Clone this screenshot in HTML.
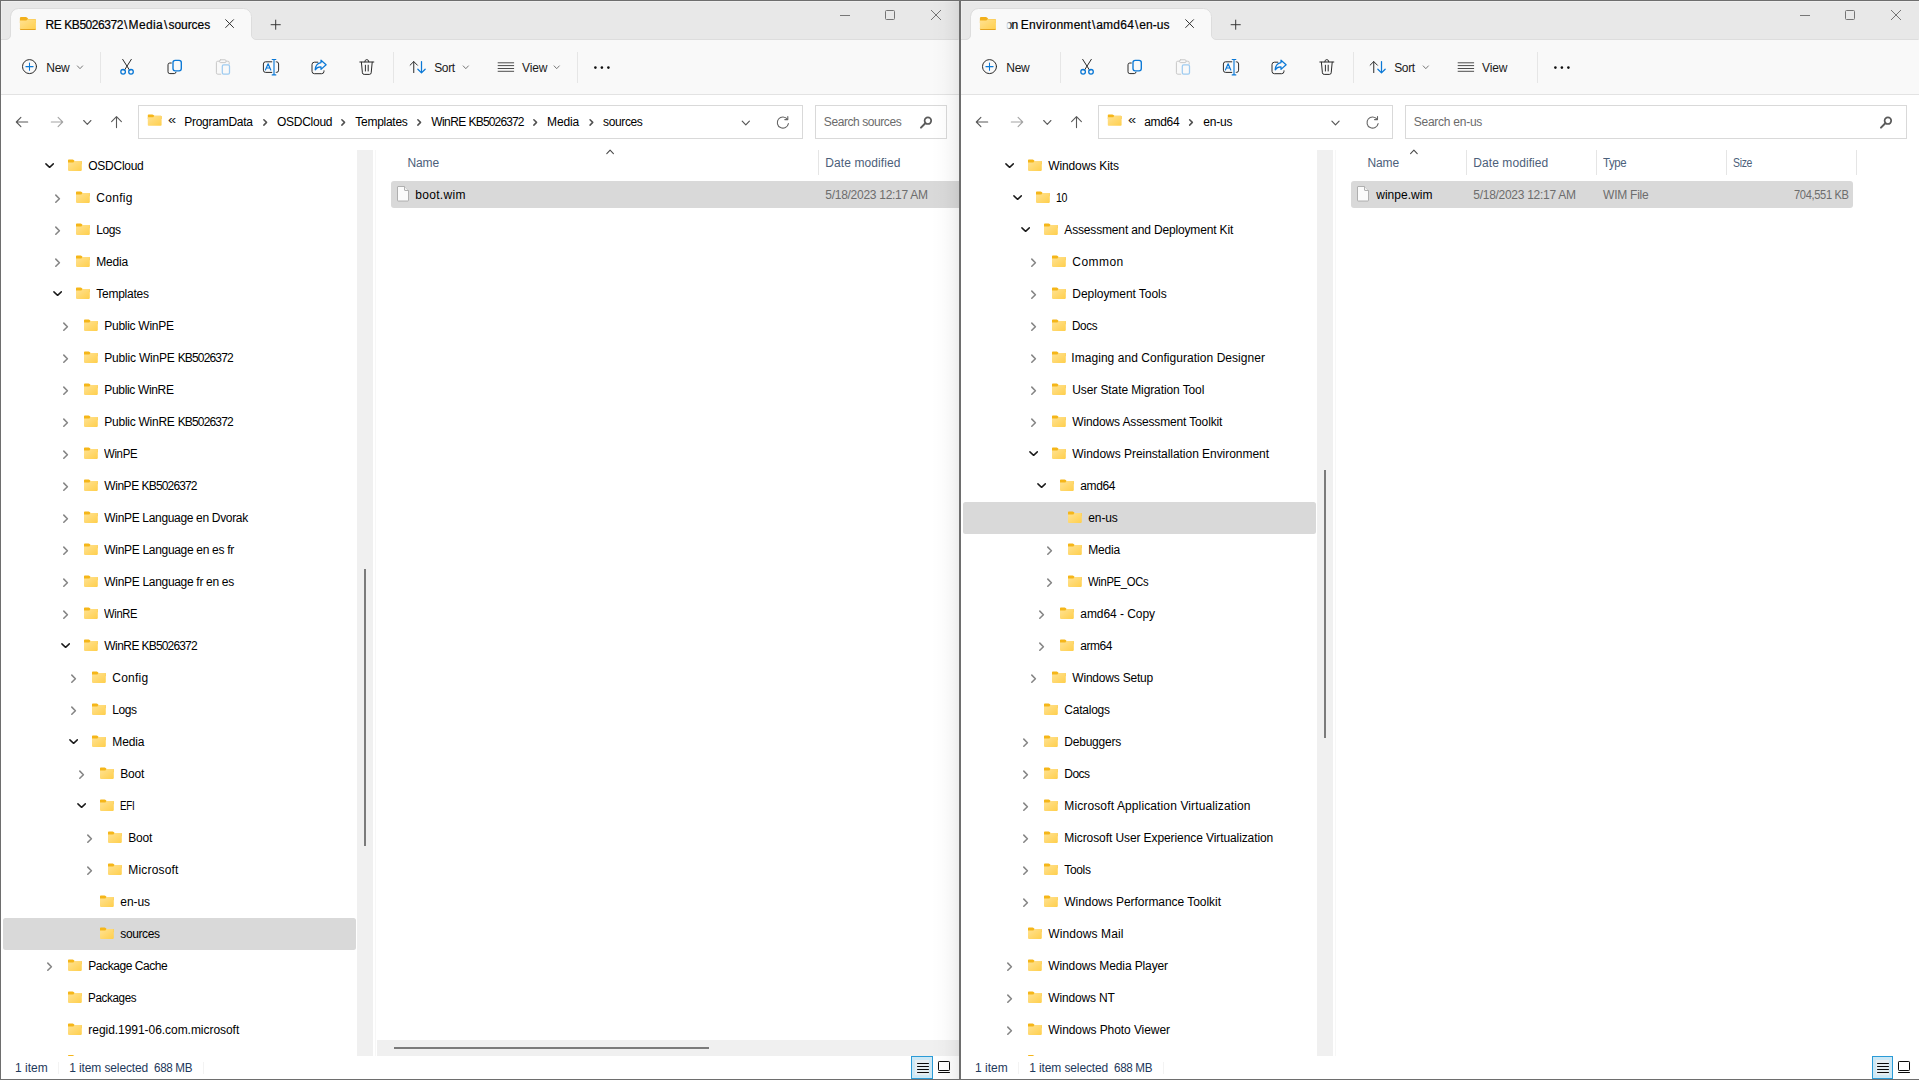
<!DOCTYPE html>
<html lang="en"><head><meta charset="utf-8"><title>File Explorer</title><style>
html,body{margin:0;padding:0;background:#fff;overflow:hidden}
#r{position:relative;width:1919px;height:1080px;overflow:hidden;background:#fff;font-family:"Liberation Sans", sans-serif;font-size:12px}
#r div,#r span,#r svg{position:absolute;box-sizing:border-box}
#r .t{white-space:nowrap;line-height:16px;height:16px}
.bd{pointer-events:none}
</style></head><body><div id="r">
<div style="left:1px;top:1px;width:958px;height:39px;background:#e8e8e8;"></div>
<div style="left:1px;top:1px;width:958px;height:1px;background:#efefef;"></div>
<div style="left:1px;top:2px;width:1px;height:37px;background:#eeeeee;"></div>
<div style="left:1px;top:40px;width:958px;height:54px;background:#f9f9f9;"></div>
<div style="left:1px;top:94px;width:958px;height:1px;background:#e3e3e3;"></div>
<svg style="left:1px;top:0px;" width="959" height="42"><path d="M0 40 V39.5 H5.5 A4.5 4.5 0 0 0 10 35 V16.5 A8 8 0 0 1 18 8.5 H243 A8 8 0 0 1 251 16.5 V35 A4.5 4.5 0 0 0 255.5 39.5 H958 V40 Z" fill="#f9f9f9"/><path d="M0 39.5 H5.5 A4.5 4.5 0 0 0 10 35 V16.5 A8 8 0 0 1 18 8.5 H243 A8 8 0 0 1 251 16.5 V35 A4.5 4.5 0 0 0 255.5 39.5 H958" fill="none" stroke="#dddddd" stroke-width="1" transform="translate(-0.5,0)"/></svg>
<svg style="left:19px;top:16px;" width="17" height="14"><g transform="translate(0.9,0.9)"><defs><linearGradient id="gb6" x1="0" y1="0" x2="1" y2="1"><stop offset="0" stop-color="#ffe293"/><stop offset="1" stop-color="#ffcf4c"/></linearGradient></defs><path d="M0 1.2 Q0 0 1.2 0 H6 Q6.6 0 7.1 0.5 L8.4 2 H14.8 Q16 2 16 3.2 V6 H0 Z" fill="#f2b01c"/><path d="M0 3.7 H6.4 L7.8 2.3 H14.8 Q16 2.3 16 3.5 V11.8 Q16 13 14.8 13 H1.2 Q0 13 0 11.8 Z" fill="url(#gb6)"/><path d="M0 11.3 V11.8 Q0 13 1.2 13 H14.8 Q16 13 16 11.8 V11.3 Q16 12.2 14.8 12.2 H1.2 Q0 12.2 0 11.3 Z" fill="#e5a31f"/></g></svg>
<span class="t" style="left:45.60px;top:16.53px;font-size:12px;color:#000;-webkit-text-stroke:0.2px #000;"><i style="font-style:normal;letter-spacing:-0.445px">RE KB5026372</i><i style="font-style:normal;margin:0 1.128px">\</i><i style="font-style:normal;letter-spacing:0.322px">Media</i><i style="font-style:normal;margin:0 1.128px">\</i><i style="font-style:normal;letter-spacing:-0.047px">sources</i></span>
<svg style="left:224px;top:18px;" width="13" height="13"><path d="M1.4 1.4 L9.8 9.8 M9.8 1.4 L1.4 9.8" stroke="#2a2a2a" stroke-width="0.95" fill="none"/></svg>
<svg style="left:269px;top:18px;" width="14" height="14"><path d="M6.7 1.7 V11.7 M1.7 6.7 H11.7" stroke="#2f2f2f" stroke-width="0.95" fill="none"/></svg>
<div style="left:840px;top:15px;width:10px;height:1px;background:#777;"></div>
<div style="left:885px;top:10px;width:10px;height:10px;border:1px solid #747474;border-radius:1.5px"></div>
<svg style="left:930px;top:9px;" width="13" height="13"><path d="M1 1 L11 11 M11 1 L1 11" stroke="#747474" stroke-width="1" fill="none"/></svg>
<svg style="left:19px;top:57px;" width="21" height="21"><g transform="translate(0.2,0)"><circle cx="10.3" cy="9.6" r="7" fill="none" stroke-linecap="round" stroke-linejoin="round" stroke="#2b2b2b" stroke-width="1"/><path d="M10.3 6 V13.2 M6.7 9.6 H13.9" fill="none" stroke-linecap="round" stroke-linejoin="round" stroke="#0a78d6" stroke-width="1.05"/></g></svg>
<span class="t" style="left:46.30px;top:60.23px;font-size:12px;color:#1a1a1a;letter-spacing:-0.320px;">New</span>
<svg style="left:74px;top:61px;" width="13" height="13"><g transform="translate(0,0.3)"><path d="M3.4 4.6 L6 7.4 L8.6 4.6" fill="none" stroke="#777" stroke-width="1" stroke-linecap="round" stroke-linejoin="round"/></g></svg>
<div style="left:100px;top:52px;width:1px;height:31px;background:#e6e6e6;"></div>
<svg style="left:116px;top:57px;" width="21" height="21"><g transform="translate(0.8,0)"><path d="M5.9 2.4 L12.9 13.4 M14.5 2.4 L7.5 13.4" fill="none" stroke-linecap="round" stroke-linejoin="round" stroke="#2b2b2b" stroke-width="1"/><circle cx="6.3" cy="14.8" r="2.3" fill="none" stroke-linecap="round" stroke-linejoin="round" stroke="#0a78d6" stroke-width="1.3"/><circle cx="14.2" cy="14.8" r="2.3" fill="none" stroke-linecap="round" stroke-linejoin="round" stroke="#0a78d6" stroke-width="1.3"/></g></svg>
<svg style="left:164px;top:57px;" width="21" height="21"><g transform="translate(0.8,0)"><path d="M6.5 6 H5 Q3.2 6 3.2 7.8 V14.8 Q3.2 16.6 5 16.6 H9.5 Q11 16.6 11.2 15.2" fill="none" stroke-linecap="round" stroke-linejoin="round" stroke="#2b2b2b" stroke-width="1"/><rect x="8.2" y="3.3" width="8.3" height="10.5" rx="2.2" fill="none" stroke-linecap="round" stroke-linejoin="round" stroke="#0a78d6" stroke-width="1.35"/></g></svg>
<svg style="left:212px;top:57px;" width="21" height="21"><g transform="translate(0.8,0)"><path d="M8 17.2 H5 Q3.6 17.2 3.6 15.8 V5.4 Q3.6 4.2 5 4.2 H6.6 M13.4 4.2 H15 Q16.4 4.2 16.4 5.4 V7" fill="none" stroke-linecap="round" stroke-linejoin="round" stroke="#c8c8c8" stroke-width="1"/><rect x="6.8" y="2.8" width="6.4" height="2.8" rx="1" fill="none" stroke-linecap="round" stroke-linejoin="round" stroke="#c8c8c8" stroke-width="1"/><rect x="9.5" y="7.8" width="7.2" height="9.4" rx="1.4" fill="none" stroke-linecap="round" stroke-linejoin="round" stroke="#9fcbf0" stroke-width="1.25"/></g></svg>
<svg style="left:260px;top:57px;" width="21" height="21"><g transform="translate(0.8,0)"><path d="M11 4.8 H4.8 Q2.6 4.8 2.6 7 V13.2 Q2.6 15.4 4.8 15.4 H11 M15.4 4.8 H15.6 Q17.8 4.8 17.8 7 V13.2 Q17.8 15.4 15.6 15.4 H15.4" fill="none" stroke-linecap="round" stroke-linejoin="round" stroke="#2b2b2b" stroke-width="1"/><path d="M13.2 2.6 V17.8 M11.4 2.5 H15 M11.4 17.9 H15" fill="none" stroke-linecap="round" stroke-linejoin="round" stroke="#0a78d6" stroke-width="1.15"/><path d="M4.6 13 L7.3 6.8 L10 13 M5.5 11 H9.1" fill="none" stroke-linecap="round" stroke-linejoin="round" stroke="#0a78d6" stroke-width="1.15"/></g></svg>
<svg style="left:308px;top:57px;" width="21" height="21"><g transform="translate(0.8,0)"><path d="M9 5.2 H5.6 Q3.2 5.2 3.2 7.6 V14.3 Q3.2 16.7 5.6 16.7 H12.8 Q15.2 16.7 15.2 14.3 V13.8" fill="none" stroke-linecap="round" stroke-linejoin="round" stroke="#2b2b2b" stroke-width="1"/><path d="M12.2 3.2 L17.3 7.8 L12.2 12.4 V9.9 Q8.4 9.7 6.4 12.8 Q6.8 6.4 12.2 5.6 Z" fill="none" stroke-linecap="round" stroke-linejoin="round" stroke="#0a78d6" stroke-width="1.25"/></g></svg>
<svg style="left:356px;top:57px;" width="21" height="21"><g transform="translate(0.8,0)"><path d="M3 5 H17 M8 4.8 Q8 2.6 10 2.6 Q12 2.6 12 4.8 M4.6 5.2 L5.6 15.8 Q5.8 17.4 7.4 17.4 H12.6 Q14.2 17.4 14.4 15.8 L15.4 5.2 M8.6 8.2 V14 M11.4 8.2 V14" fill="none" stroke-linecap="round" stroke-linejoin="round" stroke="#2b2b2b" stroke-width="1"/></g></svg>
<div style="left:393px;top:52px;width:1px;height:31px;background:#e6e6e6;"></div>
<svg style="left:407px;top:57px;" width="21" height="21"><g transform="translate(0.8,0)"><path d="M5.95 15.6 V4.7 M2.3 8.2 L5.95 4.55 L9.6 8.2" fill="none" stroke-linecap="round" stroke-linejoin="round" stroke="#2b2b2b" stroke-width="1"/><path d="M13.7 4.6 V15.7 M10.05 12.2 L13.7 15.85 L17.35 12.2" fill="none" stroke-linecap="round" stroke-linejoin="round" stroke="#0a78d6" stroke-width="1.25"/></g></svg>
<span class="t" style="left:434.20px;top:60.23px;font-size:12px;color:#1a1a1a;letter-spacing:-0.358px;">Sort</span>
<svg style="left:459px;top:61px;" width="13" height="13"><g transform="translate(0.8,0.3)"><path d="M3.4 4.6 L6 7.4 L8.6 4.6" fill="none" stroke="#777" stroke-width="1" stroke-linecap="round" stroke-linejoin="round"/></g></svg>
<svg style="left:495px;top:57px;" width="21" height="21"><g transform="translate(0.8,0)"><path d="M2.3 5.8 H17.9 M2.3 8.6 H17.9 M2.3 11.5 H17.9 M2.3 14.3 H17.9" fill="none" stroke-linecap="round" stroke-linejoin="round" stroke="#3a3a3a" stroke-width="0.9"/></g></svg>
<span class="t" style="left:522.00px;top:60.23px;font-size:12px;color:#1a1a1a;letter-spacing:-0.109px;">View</span>
<svg style="left:550px;top:61px;" width="13" height="13"><g transform="translate(0.7,0.3)"><path d="M3.4 4.6 L6 7.4 L8.6 4.6" fill="none" stroke="#777" stroke-width="1" stroke-linecap="round" stroke-linejoin="round"/></g></svg>
<div style="left:577px;top:52px;width:1px;height:31px;background:#e6e6e6;"></div>
<svg style="left:590px;top:62px;" width="25" height="13"><circle cx="5.4" cy="5.6" r="1.3" fill="#111"/><circle cx="11.9" cy="5.6" r="1.3" fill="#111"/><circle cx="18.4" cy="5.6" r="1.3" fill="#111"/></svg>
<svg style="left:14px;top:114px;" width="17" height="17"><path d="M13.7 8 H2.4 M6.9 3.4 L2.3 8 L6.9 12.6" fill="none" stroke-linecap="round" stroke-linejoin="round" stroke="#585858" stroke-width="1.1"/></svg>
<svg style="left:49px;top:114px;" width="17" height="17"><path d="M2.3 8 H13.6 M9.1 3.4 L13.7 8 L9.1 12.6" fill="none" stroke-linecap="round" stroke-linejoin="round" stroke="#a4a4a4" stroke-width="1.1"/></svg>
<svg style="left:81px;top:116px;" width="13" height="13"><g transform="translate(0.3,0.4)"><path d="M2.4 4.1 L6 7.9 L9.6 4.1" fill="none" stroke="#5c5c5c" stroke-width="1.1" stroke-linecap="round" stroke-linejoin="round"/></g></svg>
<svg style="left:108px;top:114px;" width="17" height="17"><g transform="translate(0.5,0)"><path d="M8 13.6 V2.9 M3.1 7.6 L8 2.7 L12.9 7.6" fill="none" stroke-linecap="round" stroke-linejoin="round" stroke="#585858" stroke-width="1.1"/></g></svg>
<div style="left:138px;top:105px;width:665px;height:34px;border:1px solid #d9d9d9;background:#fff"></div>
<svg style="left:147px;top:114px;" width="16" height="13"><g transform="translate(0.2,0.1)"><defs><linearGradient id="g37" x1="0" y1="0" x2="1" y2="1"><stop offset="0" stop-color="#ffe293"/><stop offset="1" stop-color="#ffcf4c"/></linearGradient></defs><path d="M0.6 1.1 Q0.6 0.3 1.4 0.3 L5.2 0.3 Q5.8 0.3 6.3 0.8 L7.2 1.7 L13.6 1.7 Q14.4 1.7 14.4 2.5 L14.4 5 L0.6 5 Z" fill="#f5b619"/><path d="M0.6 3.2 L6 3.2 L7 1.9 L13.6 1.9 Q14.4 1.9 14.4 2.7 L14.4 10.9 Q14.4 11.7 13.6 11.7 L1.4 11.7 Q0.6 11.7 0.6 10.9 Z" fill="url(#g37)"/></g></svg>
<span class="t" style="left:168.20px;top:112.23px;font-size:12px;color:#222;transform:scaleX(1.22);transform-origin:0 50%;">«</span>
<span class="t" style="left:184.20px;top:114.33px;font-size:12px;color:#000;letter-spacing:-0.259px;">ProgramData</span>
<svg style="left:259px;top:116px;" width="13" height="13"><g transform="translate(0.2,0.4)"><path d="M4.65 3.3 L7.35 6 L4.65 8.7" fill="none" stroke="#505050" stroke-width="1.5" stroke-linecap="round" stroke-linejoin="round"/></g></svg>
<span class="t" style="left:277.00px;top:114.33px;font-size:12px;color:#000;letter-spacing:-0.269px;">OSDCloud</span>
<svg style="left:337px;top:116px;" width="13" height="13"><g transform="translate(0.2,0.4)"><path d="M4.65 3.3 L7.35 6 L4.65 8.7" fill="none" stroke="#505050" stroke-width="1.5" stroke-linecap="round" stroke-linejoin="round"/></g></svg>
<span class="t" style="left:355.30px;top:114.33px;font-size:12px;color:#000;letter-spacing:-0.274px;">Templates</span>
<svg style="left:413px;top:116px;" width="13" height="13"><g transform="translate(0.2,0.4)"><path d="M4.65 3.3 L7.35 6 L4.65 8.7" fill="none" stroke="#505050" stroke-width="1.5" stroke-linecap="round" stroke-linejoin="round"/></g></svg>
<span class="t" style="left:431.20px;top:114.33px;font-size:12px;color:#000;"><i style="font-style:normal;letter-spacing:-0.545px">WinRE </i><i style="font-style:normal;letter-spacing:-0.848px">KB5026372</i></span>
<svg style="left:529px;top:116px;" width="13" height="13"><g transform="translate(0.2,0.4)"><path d="M4.65 3.3 L7.35 6 L4.65 8.7" fill="none" stroke="#505050" stroke-width="1.5" stroke-linecap="round" stroke-linejoin="round"/></g></svg>
<span class="t" style="left:547.10px;top:114.33px;font-size:12px;color:#000;letter-spacing:-0.152px;">Media</span>
<svg style="left:585px;top:116px;" width="13" height="13"><g transform="translate(0.4,0.4)"><path d="M4.65 3.3 L7.35 6 L4.65 8.7" fill="none" stroke="#505050" stroke-width="1.5" stroke-linecap="round" stroke-linejoin="round"/></g></svg>
<span class="t" style="left:603.10px;top:114.33px;font-size:12px;color:#000;letter-spacing:-0.386px;">sources</span>
<svg style="left:739px;top:117px;" width="13" height="13"><g transform="translate(0.8,0)"><path d="M2.4 4.1 L6 7.9 L9.6 4.1" fill="none" stroke="#555" stroke-width="1.15" stroke-linecap="round" stroke-linejoin="round"/></g></svg>
<svg style="left:774px;top:115px;" width="17" height="17"><g transform="translate(0.8,0)"><path d="M12.6 4.2 A5.6 5.6 0 1 0 13.6 8.6" fill="none" stroke-linecap="round" stroke-linejoin="round" stroke="#666" stroke-width="1.1"/><path d="M13 1.6 V4.6 H10" fill="none" stroke-linecap="round" stroke-linejoin="round" stroke="#666" stroke-width="1.1"/></g></svg>
<div style="left:815px;top:105px;width:132px;height:34px;border:1px solid #d9d9d9;background:#fff"></div>
<span class="t" style="left:823.80px;top:114.33px;font-size:12px;color:#6b6b6b;letter-spacing:-0.421px;">Search sources</span>
<svg style="left:919px;top:115px;" width="15" height="15"><circle cx="8.9" cy="5.7" r="3.3" fill="none" stroke-linecap="round" stroke-linejoin="round" stroke="#5a5a5a" stroke-width="1.7"/><path d="M6.3 8.3 L2 12.6" fill="none" stroke-linecap="round" stroke-linejoin="round" stroke="#5a5a5a" stroke-width="2"/></svg>
<svg style="left:43px;top:159px;" width="13" height="13"><g transform="translate(0.6,0.6)"><path d="M2.3 4.25 L6 7.75 L9.7 4.25" fill="none" stroke="#1a1a1a" stroke-width="1.45" stroke-linecap="round" stroke-linejoin="round"/></g></svg>
<svg style="left:67px;top:159px;" width="16" height="13"><g transform="translate(0.4,0.2)"><defs><linearGradient id="g56" x1="0" y1="0" x2="1" y2="1"><stop offset="0" stop-color="#ffe293"/><stop offset="1" stop-color="#ffcf4c"/></linearGradient></defs><path d="M0.6 1.1 Q0.6 0.3 1.4 0.3 L5.2 0.3 Q5.8 0.3 6.3 0.8 L7.2 1.7 L13.6 1.7 Q14.4 1.7 14.4 2.5 L14.4 5 L0.6 5 Z" fill="#f5b619"/><path d="M0.6 3.2 L6 3.2 L7 1.9 L13.6 1.9 Q14.4 1.9 14.4 2.7 L14.4 10.9 Q14.4 11.7 13.6 11.7 L1.4 11.7 Q0.6 11.7 0.6 10.9 Z" fill="url(#g56)"/></g></svg>
<span class="t" style="left:88.30px;top:158.23px;font-size:12px;color:#000;letter-spacing:-0.269px;">OSDCloud</span>
<svg style="left:51px;top:192px;" width="13" height="13"><g transform="translate(0.6,0.7)"><path d="M4.2 2.4 L7.8 6 L4.2 9.6" fill="none" stroke="#858585" stroke-width="1.55" stroke-linecap="round" stroke-linejoin="round"/></g></svg>
<svg style="left:75px;top:191px;" width="16" height="13"><g transform="translate(0.4,0.2)"><defs><linearGradient id="g59" x1="0" y1="0" x2="1" y2="1"><stop offset="0" stop-color="#ffe293"/><stop offset="1" stop-color="#ffcf4c"/></linearGradient></defs><path d="M0.6 1.1 Q0.6 0.3 1.4 0.3 L5.2 0.3 Q5.8 0.3 6.3 0.8 L7.2 1.7 L13.6 1.7 Q14.4 1.7 14.4 2.5 L14.4 5 L0.6 5 Z" fill="#f5b619"/><path d="M0.6 3.2 L6 3.2 L7 1.9 L13.6 1.9 Q14.4 1.9 14.4 2.7 L14.4 10.9 Q14.4 11.7 13.6 11.7 L1.4 11.7 Q0.6 11.7 0.6 10.9 Z" fill="url(#g59)"/></g></svg>
<span class="t" style="left:96.30px;top:190.23px;font-size:12px;color:#000;letter-spacing:0.277px;">Config</span>
<svg style="left:51px;top:224px;" width="13" height="13"><g transform="translate(0.6,0.7)"><path d="M4.2 2.4 L7.8 6 L4.2 9.6" fill="none" stroke="#858585" stroke-width="1.55" stroke-linecap="round" stroke-linejoin="round"/></g></svg>
<svg style="left:75px;top:223px;" width="16" height="13"><g transform="translate(0.4,0.2)"><defs><linearGradient id="g62" x1="0" y1="0" x2="1" y2="1"><stop offset="0" stop-color="#ffe293"/><stop offset="1" stop-color="#ffcf4c"/></linearGradient></defs><path d="M0.6 1.1 Q0.6 0.3 1.4 0.3 L5.2 0.3 Q5.8 0.3 6.3 0.8 L7.2 1.7 L13.6 1.7 Q14.4 1.7 14.4 2.5 L14.4 5 L0.6 5 Z" fill="#f5b619"/><path d="M0.6 3.2 L6 3.2 L7 1.9 L13.6 1.9 Q14.4 1.9 14.4 2.7 L14.4 10.9 Q14.4 11.7 13.6 11.7 L1.4 11.7 Q0.6 11.7 0.6 10.9 Z" fill="url(#g62)"/></g></svg>
<span class="t" style="left:96.30px;top:222.23px;font-size:12px;color:#000;letter-spacing:-0.407px;">Logs</span>
<svg style="left:51px;top:256px;" width="13" height="13"><g transform="translate(0.6,0.7)"><path d="M4.2 2.4 L7.8 6 L4.2 9.6" fill="none" stroke="#858585" stroke-width="1.55" stroke-linecap="round" stroke-linejoin="round"/></g></svg>
<svg style="left:75px;top:255px;" width="16" height="13"><g transform="translate(0.4,0.2)"><defs><linearGradient id="g65" x1="0" y1="0" x2="1" y2="1"><stop offset="0" stop-color="#ffe293"/><stop offset="1" stop-color="#ffcf4c"/></linearGradient></defs><path d="M0.6 1.1 Q0.6 0.3 1.4 0.3 L5.2 0.3 Q5.8 0.3 6.3 0.8 L7.2 1.7 L13.6 1.7 Q14.4 1.7 14.4 2.5 L14.4 5 L0.6 5 Z" fill="#f5b619"/><path d="M0.6 3.2 L6 3.2 L7 1.9 L13.6 1.9 Q14.4 1.9 14.4 2.7 L14.4 10.9 Q14.4 11.7 13.6 11.7 L1.4 11.7 Q0.6 11.7 0.6 10.9 Z" fill="url(#g65)"/></g></svg>
<span class="t" style="left:96.30px;top:254.23px;font-size:12px;color:#000;letter-spacing:-0.177px;">Media</span>
<svg style="left:51px;top:287px;" width="13" height="13"><g transform="translate(0.6,0.6)"><path d="M2.3 4.25 L6 7.75 L9.7 4.25" fill="none" stroke="#1a1a1a" stroke-width="1.45" stroke-linecap="round" stroke-linejoin="round"/></g></svg>
<svg style="left:75px;top:287px;" width="16" height="13"><g transform="translate(0.4,0.2)"><defs><linearGradient id="g68" x1="0" y1="0" x2="1" y2="1"><stop offset="0" stop-color="#ffe293"/><stop offset="1" stop-color="#ffcf4c"/></linearGradient></defs><path d="M0.6 1.1 Q0.6 0.3 1.4 0.3 L5.2 0.3 Q5.8 0.3 6.3 0.8 L7.2 1.7 L13.6 1.7 Q14.4 1.7 14.4 2.5 L14.4 5 L0.6 5 Z" fill="#f5b619"/><path d="M0.6 3.2 L6 3.2 L7 1.9 L13.6 1.9 Q14.4 1.9 14.4 2.7 L14.4 10.9 Q14.4 11.7 13.6 11.7 L1.4 11.7 Q0.6 11.7 0.6 10.9 Z" fill="url(#g68)"/></g></svg>
<span class="t" style="left:96.30px;top:286.23px;font-size:12px;color:#000;letter-spacing:-0.261px;">Templates</span>
<svg style="left:59px;top:320px;" width="13" height="13"><g transform="translate(0.6,0.7)"><path d="M4.2 2.4 L7.8 6 L4.2 9.6" fill="none" stroke="#858585" stroke-width="1.55" stroke-linecap="round" stroke-linejoin="round"/></g></svg>
<svg style="left:83px;top:319px;" width="16" height="13"><g transform="translate(0.4,0.2)"><defs><linearGradient id="g71" x1="0" y1="0" x2="1" y2="1"><stop offset="0" stop-color="#ffe293"/><stop offset="1" stop-color="#ffcf4c"/></linearGradient></defs><path d="M0.6 1.1 Q0.6 0.3 1.4 0.3 L5.2 0.3 Q5.8 0.3 6.3 0.8 L7.2 1.7 L13.6 1.7 Q14.4 1.7 14.4 2.5 L14.4 5 L0.6 5 Z" fill="#f5b619"/><path d="M0.6 3.2 L6 3.2 L7 1.9 L13.6 1.9 Q14.4 1.9 14.4 2.7 L14.4 10.9 Q14.4 11.7 13.6 11.7 L1.4 11.7 Q0.6 11.7 0.6 10.9 Z" fill="url(#g71)"/></g></svg>
<span class="t" style="left:104.30px;top:318.23px;font-size:12px;color:#000;letter-spacing:-0.281px;">Public WinPE</span>
<svg style="left:59px;top:352px;" width="13" height="13"><g transform="translate(0.6,0.7)"><path d="M4.2 2.4 L7.8 6 L4.2 9.6" fill="none" stroke="#858585" stroke-width="1.55" stroke-linecap="round" stroke-linejoin="round"/></g></svg>
<svg style="left:83px;top:351px;" width="16" height="13"><g transform="translate(0.4,0.2)"><defs><linearGradient id="g74" x1="0" y1="0" x2="1" y2="1"><stop offset="0" stop-color="#ffe293"/><stop offset="1" stop-color="#ffcf4c"/></linearGradient></defs><path d="M0.6 1.1 Q0.6 0.3 1.4 0.3 L5.2 0.3 Q5.8 0.3 6.3 0.8 L7.2 1.7 L13.6 1.7 Q14.4 1.7 14.4 2.5 L14.4 5 L0.6 5 Z" fill="#f5b619"/><path d="M0.6 3.2 L6 3.2 L7 1.9 L13.6 1.9 Q14.4 1.9 14.4 2.7 L14.4 10.9 Q14.4 11.7 13.6 11.7 L1.4 11.7 Q0.6 11.7 0.6 10.9 Z" fill="url(#g74)"/></g></svg>
<span class="t" style="left:104.30px;top:350.23px;font-size:12px;color:#000;"><i style="font-style:normal;letter-spacing:-0.202px">Public WinPE </i><i style="font-style:normal;letter-spacing:-0.848px">KB5026372</i></span>
<svg style="left:59px;top:384px;" width="13" height="13"><g transform="translate(0.6,0.7)"><path d="M4.2 2.4 L7.8 6 L4.2 9.6" fill="none" stroke="#858585" stroke-width="1.55" stroke-linecap="round" stroke-linejoin="round"/></g></svg>
<svg style="left:83px;top:383px;" width="16" height="13"><g transform="translate(0.4,0.2)"><defs><linearGradient id="g77" x1="0" y1="0" x2="1" y2="1"><stop offset="0" stop-color="#ffe293"/><stop offset="1" stop-color="#ffcf4c"/></linearGradient></defs><path d="M0.6 1.1 Q0.6 0.3 1.4 0.3 L5.2 0.3 Q5.8 0.3 6.3 0.8 L7.2 1.7 L13.6 1.7 Q14.4 1.7 14.4 2.5 L14.4 5 L0.6 5 Z" fill="#f5b619"/><path d="M0.6 3.2 L6 3.2 L7 1.9 L13.6 1.9 Q14.4 1.9 14.4 2.7 L14.4 10.9 Q14.4 11.7 13.6 11.7 L1.4 11.7 Q0.6 11.7 0.6 10.9 Z" fill="url(#g77)"/></g></svg>
<span class="t" style="left:104.30px;top:382.23px;font-size:12px;color:#000;letter-spacing:-0.341px;">Public WinRE</span>
<svg style="left:59px;top:416px;" width="13" height="13"><g transform="translate(0.6,0.7)"><path d="M4.2 2.4 L7.8 6 L4.2 9.6" fill="none" stroke="#858585" stroke-width="1.55" stroke-linecap="round" stroke-linejoin="round"/></g></svg>
<svg style="left:83px;top:415px;" width="16" height="13"><g transform="translate(0.4,0.2)"><defs><linearGradient id="g80" x1="0" y1="0" x2="1" y2="1"><stop offset="0" stop-color="#ffe293"/><stop offset="1" stop-color="#ffcf4c"/></linearGradient></defs><path d="M0.6 1.1 Q0.6 0.3 1.4 0.3 L5.2 0.3 Q5.8 0.3 6.3 0.8 L7.2 1.7 L13.6 1.7 Q14.4 1.7 14.4 2.5 L14.4 5 L0.6 5 Z" fill="#f5b619"/><path d="M0.6 3.2 L6 3.2 L7 1.9 L13.6 1.9 Q14.4 1.9 14.4 2.7 L14.4 10.9 Q14.4 11.7 13.6 11.7 L1.4 11.7 Q0.6 11.7 0.6 10.9 Z" fill="url(#g80)"/></g></svg>
<span class="t" style="left:104.30px;top:414.23px;font-size:12px;color:#000;"><i style="font-style:normal;letter-spacing:-0.253px">Public WinRE </i><i style="font-style:normal;letter-spacing:-0.848px">KB5026372</i></span>
<svg style="left:59px;top:448px;" width="13" height="13"><g transform="translate(0.6,0.7)"><path d="M4.2 2.4 L7.8 6 L4.2 9.6" fill="none" stroke="#858585" stroke-width="1.55" stroke-linecap="round" stroke-linejoin="round"/></g></svg>
<svg style="left:83px;top:447px;" width="16" height="13"><g transform="translate(0.4,0.2)"><defs><linearGradient id="g83" x1="0" y1="0" x2="1" y2="1"><stop offset="0" stop-color="#ffe293"/><stop offset="1" stop-color="#ffcf4c"/></linearGradient></defs><path d="M0.6 1.1 Q0.6 0.3 1.4 0.3 L5.2 0.3 Q5.8 0.3 6.3 0.8 L7.2 1.7 L13.6 1.7 Q14.4 1.7 14.4 2.5 L14.4 5 L0.6 5 Z" fill="#f5b619"/><path d="M0.6 3.2 L6 3.2 L7 1.9 L13.6 1.9 Q14.4 1.9 14.4 2.7 L14.4 10.9 Q14.4 11.7 13.6 11.7 L1.4 11.7 Q0.6 11.7 0.6 10.9 Z" fill="url(#g83)"/></g></svg>
<span class="t" style="left:104.30px;top:446.23px;font-size:12px;color:#000;letter-spacing:-0.350px;transform:scaleX(0.9498);transform-origin:0.00px 50%;">WinPE</span>
<svg style="left:59px;top:480px;" width="13" height="13"><g transform="translate(0.6,0.7)"><path d="M4.2 2.4 L7.8 6 L4.2 9.6" fill="none" stroke="#858585" stroke-width="1.55" stroke-linecap="round" stroke-linejoin="round"/></g></svg>
<svg style="left:83px;top:479px;" width="16" height="13"><g transform="translate(0.4,0.2)"><defs><linearGradient id="g86" x1="0" y1="0" x2="1" y2="1"><stop offset="0" stop-color="#ffe293"/><stop offset="1" stop-color="#ffcf4c"/></linearGradient></defs><path d="M0.6 1.1 Q0.6 0.3 1.4 0.3 L5.2 0.3 Q5.8 0.3 6.3 0.8 L7.2 1.7 L13.6 1.7 Q14.4 1.7 14.4 2.5 L14.4 5 L0.6 5 Z" fill="#f5b619"/><path d="M0.6 3.2 L6 3.2 L7 1.9 L13.6 1.9 Q14.4 1.9 14.4 2.7 L14.4 10.9 Q14.4 11.7 13.6 11.7 L1.4 11.7 Q0.6 11.7 0.6 10.9 Z" fill="url(#g86)"/></g></svg>
<span class="t" style="left:104.30px;top:478.23px;font-size:12px;color:#000;"><i style="font-style:normal;letter-spacing:-0.453px">WinPE </i><i style="font-style:normal;letter-spacing:-0.848px">KB5026372</i></span>
<svg style="left:59px;top:512px;" width="13" height="13"><g transform="translate(0.6,0.7)"><path d="M4.2 2.4 L7.8 6 L4.2 9.6" fill="none" stroke="#858585" stroke-width="1.55" stroke-linecap="round" stroke-linejoin="round"/></g></svg>
<svg style="left:83px;top:511px;" width="16" height="13"><g transform="translate(0.4,0.2)"><defs><linearGradient id="g89" x1="0" y1="0" x2="1" y2="1"><stop offset="0" stop-color="#ffe293"/><stop offset="1" stop-color="#ffcf4c"/></linearGradient></defs><path d="M0.6 1.1 Q0.6 0.3 1.4 0.3 L5.2 0.3 Q5.8 0.3 6.3 0.8 L7.2 1.7 L13.6 1.7 Q14.4 1.7 14.4 2.5 L14.4 5 L0.6 5 Z" fill="#f5b619"/><path d="M0.6 3.2 L6 3.2 L7 1.9 L13.6 1.9 Q14.4 1.9 14.4 2.7 L14.4 10.9 Q14.4 11.7 13.6 11.7 L1.4 11.7 Q0.6 11.7 0.6 10.9 Z" fill="url(#g89)"/></g></svg>
<span class="t" style="left:104.30px;top:510.23px;font-size:12px;color:#000;letter-spacing:-0.327px;">WinPE Language en Dvorak</span>
<svg style="left:59px;top:544px;" width="13" height="13"><g transform="translate(0.6,0.7)"><path d="M4.2 2.4 L7.8 6 L4.2 9.6" fill="none" stroke="#858585" stroke-width="1.55" stroke-linecap="round" stroke-linejoin="round"/></g></svg>
<svg style="left:83px;top:543px;" width="16" height="13"><g transform="translate(0.4,0.2)"><defs><linearGradient id="g92" x1="0" y1="0" x2="1" y2="1"><stop offset="0" stop-color="#ffe293"/><stop offset="1" stop-color="#ffcf4c"/></linearGradient></defs><path d="M0.6 1.1 Q0.6 0.3 1.4 0.3 L5.2 0.3 Q5.8 0.3 6.3 0.8 L7.2 1.7 L13.6 1.7 Q14.4 1.7 14.4 2.5 L14.4 5 L0.6 5 Z" fill="#f5b619"/><path d="M0.6 3.2 L6 3.2 L7 1.9 L13.6 1.9 Q14.4 1.9 14.4 2.7 L14.4 10.9 Q14.4 11.7 13.6 11.7 L1.4 11.7 Q0.6 11.7 0.6 10.9 Z" fill="url(#g92)"/></g></svg>
<span class="t" style="left:104.30px;top:542.23px;font-size:12px;color:#000;letter-spacing:-0.312px;">WinPE Language en es fr</span>
<svg style="left:59px;top:576px;" width="13" height="13"><g transform="translate(0.6,0.7)"><path d="M4.2 2.4 L7.8 6 L4.2 9.6" fill="none" stroke="#858585" stroke-width="1.55" stroke-linecap="round" stroke-linejoin="round"/></g></svg>
<svg style="left:83px;top:575px;" width="16" height="13"><g transform="translate(0.4,0.2)"><defs><linearGradient id="g95" x1="0" y1="0" x2="1" y2="1"><stop offset="0" stop-color="#ffe293"/><stop offset="1" stop-color="#ffcf4c"/></linearGradient></defs><path d="M0.6 1.1 Q0.6 0.3 1.4 0.3 L5.2 0.3 Q5.8 0.3 6.3 0.8 L7.2 1.7 L13.6 1.7 Q14.4 1.7 14.4 2.5 L14.4 5 L0.6 5 Z" fill="#f5b619"/><path d="M0.6 3.2 L6 3.2 L7 1.9 L13.6 1.9 Q14.4 1.9 14.4 2.7 L14.4 10.9 Q14.4 11.7 13.6 11.7 L1.4 11.7 Q0.6 11.7 0.6 10.9 Z" fill="url(#g95)"/></g></svg>
<span class="t" style="left:104.30px;top:574.23px;font-size:12px;color:#000;letter-spacing:-0.311px;">WinPE Language fr en es</span>
<svg style="left:59px;top:608px;" width="13" height="13"><g transform="translate(0.6,0.7)"><path d="M4.2 2.4 L7.8 6 L4.2 9.6" fill="none" stroke="#858585" stroke-width="1.55" stroke-linecap="round" stroke-linejoin="round"/></g></svg>
<svg style="left:83px;top:607px;" width="16" height="13"><g transform="translate(0.4,0.2)"><defs><linearGradient id="g98" x1="0" y1="0" x2="1" y2="1"><stop offset="0" stop-color="#ffe293"/><stop offset="1" stop-color="#ffcf4c"/></linearGradient></defs><path d="M0.6 1.1 Q0.6 0.3 1.4 0.3 L5.2 0.3 Q5.8 0.3 6.3 0.8 L7.2 1.7 L13.6 1.7 Q14.4 1.7 14.4 2.5 L14.4 5 L0.6 5 Z" fill="#f5b619"/><path d="M0.6 3.2 L6 3.2 L7 1.9 L13.6 1.9 Q14.4 1.9 14.4 2.7 L14.4 10.9 Q14.4 11.7 13.6 11.7 L1.4 11.7 Q0.6 11.7 0.6 10.9 Z" fill="url(#g98)"/></g></svg>
<span class="t" style="left:104.30px;top:606.23px;font-size:12px;color:#000;letter-spacing:-0.350px;transform:scaleX(0.9323);transform-origin:0.00px 50%;">WinRE</span>
<svg style="left:59px;top:639px;" width="13" height="13"><g transform="translate(0.6,0.6)"><path d="M2.3 4.25 L6 7.75 L9.7 4.25" fill="none" stroke="#1a1a1a" stroke-width="1.45" stroke-linecap="round" stroke-linejoin="round"/></g></svg>
<svg style="left:83px;top:639px;" width="16" height="13"><g transform="translate(0.4,0.2)"><defs><linearGradient id="g101" x1="0" y1="0" x2="1" y2="1"><stop offset="0" stop-color="#ffe293"/><stop offset="1" stop-color="#ffcf4c"/></linearGradient></defs><path d="M0.6 1.1 Q0.6 0.3 1.4 0.3 L5.2 0.3 Q5.8 0.3 6.3 0.8 L7.2 1.7 L13.6 1.7 Q14.4 1.7 14.4 2.5 L14.4 5 L0.6 5 Z" fill="#f5b619"/><path d="M0.6 3.2 L6 3.2 L7 1.9 L13.6 1.9 Q14.4 1.9 14.4 2.7 L14.4 10.9 Q14.4 11.7 13.6 11.7 L1.4 11.7 Q0.6 11.7 0.6 10.9 Z" fill="url(#g101)"/></g></svg>
<span class="t" style="left:104.30px;top:638.23px;font-size:12px;color:#000;"><i style="font-style:normal;letter-spacing:-0.562px">WinRE </i><i style="font-style:normal;letter-spacing:-0.848px">KB5026372</i></span>
<svg style="left:67px;top:672px;" width="13" height="13"><g transform="translate(0.6,0.7)"><path d="M4.2 2.4 L7.8 6 L4.2 9.6" fill="none" stroke="#858585" stroke-width="1.55" stroke-linecap="round" stroke-linejoin="round"/></g></svg>
<svg style="left:91px;top:671px;" width="16" height="13"><g transform="translate(0.4,0.2)"><defs><linearGradient id="g104" x1="0" y1="0" x2="1" y2="1"><stop offset="0" stop-color="#ffe293"/><stop offset="1" stop-color="#ffcf4c"/></linearGradient></defs><path d="M0.6 1.1 Q0.6 0.3 1.4 0.3 L5.2 0.3 Q5.8 0.3 6.3 0.8 L7.2 1.7 L13.6 1.7 Q14.4 1.7 14.4 2.5 L14.4 5 L0.6 5 Z" fill="#f5b619"/><path d="M0.6 3.2 L6 3.2 L7 1.9 L13.6 1.9 Q14.4 1.9 14.4 2.7 L14.4 10.9 Q14.4 11.7 13.6 11.7 L1.4 11.7 Q0.6 11.7 0.6 10.9 Z" fill="url(#g104)"/></g></svg>
<span class="t" style="left:112.30px;top:670.23px;font-size:12px;color:#000;letter-spacing:0.237px;">Config</span>
<svg style="left:67px;top:704px;" width="13" height="13"><g transform="translate(0.6,0.7)"><path d="M4.2 2.4 L7.8 6 L4.2 9.6" fill="none" stroke="#858585" stroke-width="1.55" stroke-linecap="round" stroke-linejoin="round"/></g></svg>
<svg style="left:91px;top:703px;" width="16" height="13"><g transform="translate(0.4,0.2)"><defs><linearGradient id="g107" x1="0" y1="0" x2="1" y2="1"><stop offset="0" stop-color="#ffe293"/><stop offset="1" stop-color="#ffcf4c"/></linearGradient></defs><path d="M0.6 1.1 Q0.6 0.3 1.4 0.3 L5.2 0.3 Q5.8 0.3 6.3 0.8 L7.2 1.7 L13.6 1.7 Q14.4 1.7 14.4 2.5 L14.4 5 L0.6 5 Z" fill="#f5b619"/><path d="M0.6 3.2 L6 3.2 L7 1.9 L13.6 1.9 Q14.4 1.9 14.4 2.7 L14.4 10.9 Q14.4 11.7 13.6 11.7 L1.4 11.7 Q0.6 11.7 0.6 10.9 Z" fill="url(#g107)"/></g></svg>
<span class="t" style="left:112.30px;top:702.23px;font-size:12px;color:#000;letter-spacing:-0.474px;">Logs</span>
<svg style="left:67px;top:735px;" width="13" height="13"><g transform="translate(0.6,0.6)"><path d="M2.3 4.25 L6 7.75 L9.7 4.25" fill="none" stroke="#1a1a1a" stroke-width="1.45" stroke-linecap="round" stroke-linejoin="round"/></g></svg>
<svg style="left:91px;top:735px;" width="16" height="13"><g transform="translate(0.4,0.2)"><defs><linearGradient id="g110" x1="0" y1="0" x2="1" y2="1"><stop offset="0" stop-color="#ffe293"/><stop offset="1" stop-color="#ffcf4c"/></linearGradient></defs><path d="M0.6 1.1 Q0.6 0.3 1.4 0.3 L5.2 0.3 Q5.8 0.3 6.3 0.8 L7.2 1.7 L13.6 1.7 Q14.4 1.7 14.4 2.5 L14.4 5 L0.6 5 Z" fill="#f5b619"/><path d="M0.6 3.2 L6 3.2 L7 1.9 L13.6 1.9 Q14.4 1.9 14.4 2.7 L14.4 10.9 Q14.4 11.7 13.6 11.7 L1.4 11.7 Q0.6 11.7 0.6 10.9 Z" fill="url(#g110)"/></g></svg>
<span class="t" style="left:112.30px;top:734.23px;font-size:12px;color:#000;letter-spacing:-0.127px;">Media</span>
<svg style="left:75px;top:768px;" width="13" height="13"><g transform="translate(0.6,0.7)"><path d="M4.2 2.4 L7.8 6 L4.2 9.6" fill="none" stroke="#858585" stroke-width="1.55" stroke-linecap="round" stroke-linejoin="round"/></g></svg>
<svg style="left:99px;top:767px;" width="16" height="13"><g transform="translate(0.4,0.2)"><defs><linearGradient id="g113" x1="0" y1="0" x2="1" y2="1"><stop offset="0" stop-color="#ffe293"/><stop offset="1" stop-color="#ffcf4c"/></linearGradient></defs><path d="M0.6 1.1 Q0.6 0.3 1.4 0.3 L5.2 0.3 Q5.8 0.3 6.3 0.8 L7.2 1.7 L13.6 1.7 Q14.4 1.7 14.4 2.5 L14.4 5 L0.6 5 Z" fill="#f5b619"/><path d="M0.6 3.2 L6 3.2 L7 1.9 L13.6 1.9 Q14.4 1.9 14.4 2.7 L14.4 10.9 Q14.4 11.7 13.6 11.7 L1.4 11.7 Q0.6 11.7 0.6 10.9 Z" fill="url(#g113)"/></g></svg>
<span class="t" style="left:120.30px;top:766.23px;font-size:12px;color:#000;letter-spacing:-0.184px;">Boot</span>
<svg style="left:75px;top:799px;" width="13" height="13"><g transform="translate(0.6,0.6)"><path d="M2.3 4.25 L6 7.75 L9.7 4.25" fill="none" stroke="#1a1a1a" stroke-width="1.45" stroke-linecap="round" stroke-linejoin="round"/></g></svg>
<svg style="left:99px;top:799px;" width="16" height="13"><g transform="translate(0.4,0.2)"><defs><linearGradient id="g116" x1="0" y1="0" x2="1" y2="1"><stop offset="0" stop-color="#ffe293"/><stop offset="1" stop-color="#ffcf4c"/></linearGradient></defs><path d="M0.6 1.1 Q0.6 0.3 1.4 0.3 L5.2 0.3 Q5.8 0.3 6.3 0.8 L7.2 1.7 L13.6 1.7 Q14.4 1.7 14.4 2.5 L14.4 5 L0.6 5 Z" fill="#f5b619"/><path d="M0.6 3.2 L6 3.2 L7 1.9 L13.6 1.9 Q14.4 1.9 14.4 2.7 L14.4 10.9 Q14.4 11.7 13.6 11.7 L1.4 11.7 Q0.6 11.7 0.6 10.9 Z" fill="url(#g116)"/></g></svg>
<span class="t" style="left:120.30px;top:798.23px;font-size:12px;color:#000;letter-spacing:-0.350px;transform:scaleX(0.8166);transform-origin:0.00px 50%;">EFI</span>
<svg style="left:83px;top:832px;" width="13" height="13"><g transform="translate(0.6,0.7)"><path d="M4.2 2.4 L7.8 6 L4.2 9.6" fill="none" stroke="#858585" stroke-width="1.55" stroke-linecap="round" stroke-linejoin="round"/></g></svg>
<svg style="left:107px;top:831px;" width="16" height="13"><g transform="translate(0.4,0.2)"><defs><linearGradient id="g119" x1="0" y1="0" x2="1" y2="1"><stop offset="0" stop-color="#ffe293"/><stop offset="1" stop-color="#ffcf4c"/></linearGradient></defs><path d="M0.6 1.1 Q0.6 0.3 1.4 0.3 L5.2 0.3 Q5.8 0.3 6.3 0.8 L7.2 1.7 L13.6 1.7 Q14.4 1.7 14.4 2.5 L14.4 5 L0.6 5 Z" fill="#f5b619"/><path d="M0.6 3.2 L6 3.2 L7 1.9 L13.6 1.9 Q14.4 1.9 14.4 2.7 L14.4 10.9 Q14.4 11.7 13.6 11.7 L1.4 11.7 Q0.6 11.7 0.6 10.9 Z" fill="url(#g119)"/></g></svg>
<span class="t" style="left:128.30px;top:830.23px;font-size:12px;color:#000;letter-spacing:-0.217px;">Boot</span>
<svg style="left:83px;top:864px;" width="13" height="13"><g transform="translate(0.6,0.7)"><path d="M4.2 2.4 L7.8 6 L4.2 9.6" fill="none" stroke="#858585" stroke-width="1.55" stroke-linecap="round" stroke-linejoin="round"/></g></svg>
<svg style="left:107px;top:863px;" width="16" height="13"><g transform="translate(0.4,0.2)"><defs><linearGradient id="g122" x1="0" y1="0" x2="1" y2="1"><stop offset="0" stop-color="#ffe293"/><stop offset="1" stop-color="#ffcf4c"/></linearGradient></defs><path d="M0.6 1.1 Q0.6 0.3 1.4 0.3 L5.2 0.3 Q5.8 0.3 6.3 0.8 L7.2 1.7 L13.6 1.7 Q14.4 1.7 14.4 2.5 L14.4 5 L0.6 5 Z" fill="#f5b619"/><path d="M0.6 3.2 L6 3.2 L7 1.9 L13.6 1.9 Q14.4 1.9 14.4 2.7 L14.4 10.9 Q14.4 11.7 13.6 11.7 L1.4 11.7 Q0.6 11.7 0.6 10.9 Z" fill="url(#g122)"/></g></svg>
<span class="t" style="left:128.30px;top:862.23px;font-size:12px;color:#000;letter-spacing:0.183px;">Microsoft</span>
<svg style="left:99px;top:895px;" width="16" height="13"><g transform="translate(0.4,0.2)"><defs><linearGradient id="g124" x1="0" y1="0" x2="1" y2="1"><stop offset="0" stop-color="#ffe293"/><stop offset="1" stop-color="#ffcf4c"/></linearGradient></defs><path d="M0.6 1.1 Q0.6 0.3 1.4 0.3 L5.2 0.3 Q5.8 0.3 6.3 0.8 L7.2 1.7 L13.6 1.7 Q14.4 1.7 14.4 2.5 L14.4 5 L0.6 5 Z" fill="#f5b619"/><path d="M0.6 3.2 L6 3.2 L7 1.9 L13.6 1.9 Q14.4 1.9 14.4 2.7 L14.4 10.9 Q14.4 11.7 13.6 11.7 L1.4 11.7 Q0.6 11.7 0.6 10.9 Z" fill="url(#g124)"/></g></svg>
<span class="t" style="left:120.30px;top:894.23px;font-size:12px;color:#000;letter-spacing:-0.054px;">en-us</span>
<div style="left:3px;top:918px;width:353px;height:32px;background:#d9d9d9;border-radius:2.5px"></div>
<svg style="left:99px;top:927px;" width="16" height="13"><g transform="translate(0.4,0.2)"><defs><linearGradient id="g127" x1="0" y1="0" x2="1" y2="1"><stop offset="0" stop-color="#ffe293"/><stop offset="1" stop-color="#ffcf4c"/></linearGradient></defs><path d="M0.6 1.1 Q0.6 0.3 1.4 0.3 L5.2 0.3 Q5.8 0.3 6.3 0.8 L7.2 1.7 L13.6 1.7 Q14.4 1.7 14.4 2.5 L14.4 5 L0.6 5 Z" fill="#f5b619"/><path d="M0.6 3.2 L6 3.2 L7 1.9 L13.6 1.9 Q14.4 1.9 14.4 2.7 L14.4 10.9 Q14.4 11.7 13.6 11.7 L1.4 11.7 Q0.6 11.7 0.6 10.9 Z" fill="url(#g127)"/></g></svg>
<span class="t" style="left:120.30px;top:926.23px;font-size:12px;color:#000;letter-spacing:-0.403px;">sources</span>
<svg style="left:43px;top:960px;" width="13" height="13"><g transform="translate(0.6,0.7)"><path d="M4.2 2.4 L7.8 6 L4.2 9.6" fill="none" stroke="#858585" stroke-width="1.55" stroke-linecap="round" stroke-linejoin="round"/></g></svg>
<svg style="left:67px;top:959px;" width="16" height="13"><g transform="translate(0.4,0.2)"><defs><linearGradient id="g130" x1="0" y1="0" x2="1" y2="1"><stop offset="0" stop-color="#ffe293"/><stop offset="1" stop-color="#ffcf4c"/></linearGradient></defs><path d="M0.6 1.1 Q0.6 0.3 1.4 0.3 L5.2 0.3 Q5.8 0.3 6.3 0.8 L7.2 1.7 L13.6 1.7 Q14.4 1.7 14.4 2.5 L14.4 5 L0.6 5 Z" fill="#f5b619"/><path d="M0.6 3.2 L6 3.2 L7 1.9 L13.6 1.9 Q14.4 1.9 14.4 2.7 L14.4 10.9 Q14.4 11.7 13.6 11.7 L1.4 11.7 Q0.6 11.7 0.6 10.9 Z" fill="url(#g130)"/></g></svg>
<span class="t" style="left:88.30px;top:958.23px;font-size:12px;color:#000;letter-spacing:-0.437px;">Package Cache</span>
<svg style="left:67px;top:991px;" width="16" height="13"><g transform="translate(0.4,0.2)"><defs><linearGradient id="g132" x1="0" y1="0" x2="1" y2="1"><stop offset="0" stop-color="#ffe293"/><stop offset="1" stop-color="#ffcf4c"/></linearGradient></defs><path d="M0.6 1.1 Q0.6 0.3 1.4 0.3 L5.2 0.3 Q5.8 0.3 6.3 0.8 L7.2 1.7 L13.6 1.7 Q14.4 1.7 14.4 2.5 L14.4 5 L0.6 5 Z" fill="#f5b619"/><path d="M0.6 3.2 L6 3.2 L7 1.9 L13.6 1.9 Q14.4 1.9 14.4 2.7 L14.4 10.9 Q14.4 11.7 13.6 11.7 L1.4 11.7 Q0.6 11.7 0.6 10.9 Z" fill="url(#g132)"/></g></svg>
<span class="t" style="left:88.30px;top:990.23px;font-size:12px;color:#000;letter-spacing:-0.350px;transform:scaleX(0.9672);transform-origin:0.00px 50%;">Packages</span>
<svg style="left:67px;top:1023px;" width="16" height="13"><g transform="translate(0.4,0.2)"><defs><linearGradient id="g134" x1="0" y1="0" x2="1" y2="1"><stop offset="0" stop-color="#ffe293"/><stop offset="1" stop-color="#ffcf4c"/></linearGradient></defs><path d="M0.6 1.1 Q0.6 0.3 1.4 0.3 L5.2 0.3 Q5.8 0.3 6.3 0.8 L7.2 1.7 L13.6 1.7 Q14.4 1.7 14.4 2.5 L14.4 5 L0.6 5 Z" fill="#f5b619"/><path d="M0.6 3.2 L6 3.2 L7 1.9 L13.6 1.9 Q14.4 1.9 14.4 2.7 L14.4 10.9 Q14.4 11.7 13.6 11.7 L1.4 11.7 Q0.6 11.7 0.6 10.9 Z" fill="url(#g134)"/></g></svg>
<span class="t" style="left:88.30px;top:1022.23px;font-size:12px;color:#000;letter-spacing:-0.044px;">regid.1991-06.com.microsoft</span>
<div style="left:66px;top:1046px;width:20px;height:10px;overflow:hidden">
<svg style="left:1px;top:8px;" width="16" height="13"><g transform="translate(0.4,0.6)"><defs><linearGradient id="g137" x1="0" y1="0" x2="1" y2="1"><stop offset="0" stop-color="#ffe293"/><stop offset="1" stop-color="#ffcf4c"/></linearGradient></defs><path d="M0.6 1.1 Q0.6 0.3 1.4 0.3 L5.2 0.3 Q5.8 0.3 6.3 0.8 L7.2 1.7 L13.6 1.7 Q14.4 1.7 14.4 2.5 L14.4 5 L0.6 5 Z" fill="#f5b619"/><path d="M0.6 3.2 L6 3.2 L7 1.9 L13.6 1.9 Q14.4 1.9 14.4 2.7 L14.4 10.9 Q14.4 11.7 13.6 11.7 L1.4 11.7 Q0.6 11.7 0.6 10.9 Z" fill="url(#g137)"/></g></svg>
</div>
<div style="left:357px;top:150px;width:16px;height:906px;background:#f0f0f0;"></div>
<div style="left:375px;top:150px;width:1px;height:906px;background:#f7f7f7;"></div>
<div style="left:364px;top:569px;width:2px;height:277px;background:#7b7b7b;"></div>
<span class="t" style="left:407.40px;top:154.83px;font-size:12px;color:#4c607a;letter-spacing:-0.112px;">Name</span>
<svg style="left:604px;top:145px;" width="13" height="13"><g transform="translate(0.1,0.9)"><path d="M2.7 7.7 L6 4.3 L9.3 7.7" fill="none" stroke="#4a4a4a" stroke-width="1.1" stroke-linecap="round" stroke-linejoin="round"/></g></svg>
<div style="left:818px;top:150px;width:1px;height:25px;background:#e5e5e5;"></div>
<span class="t" style="left:825.30px;top:154.83px;font-size:12px;color:#4c607a;letter-spacing:0.086px;">Date modified</span>
<div style="left:391px;top:181px;width:568px;height:27px;background:#d9d9d9;border-radius:3px 0 0 3px"></div>
<svg style="left:397px;top:186px;" width="13" height="17"><path d="M1 0.5 H7.5 L11.5 4.5 V14.5 Q11.5 15 11 15 H1 Q0.5 15 0.5 14.5 V1 Q0.5 0.5 1 0.5 Z" fill="#fbfbfb" stroke="#a8a8a8" stroke-width="0.9"/><path d="M7.5 0.5 V4 Q7.5 4.5 8 4.5 H11.5" fill="#f0f0f0" stroke="#a8a8a8" stroke-width="0.9"/></svg>
<span class="t" style="left:415.20px;top:187.23px;font-size:12px;color:#000;letter-spacing:0.311px;">boot.wim</span>
<span class="t" style="left:825.30px;top:187.23px;font-size:12px;color:#6d6d6d;letter-spacing:-0.276px;">5/18/2023 12:17 AM</span>
<div style="left:377px;top:1040px;width:582px;height:16px;background:#f0f0f0;"></div>
<div style="left:394px;top:1047px;width:315px;height:2px;background:#7b7b7b;"></div>
<span class="t" style="left:15.10px;top:1060.23px;font-size:12px;color:#1e395b;letter-spacing:0.004px;">1 item</span>
<div style="left:58px;top:1062px;width:1px;height:12px;background:#f3f3f3;"></div>
<span class="t" style="left:69.30px;top:1060.23px;font-size:12px;color:#1e395b;letter-spacing:-0.124px;">1 item selected</span>
<span class="t" style="left:154.20px;top:1060.23px;font-size:12px;color:#1e395b;letter-spacing:-0.350px;transform:scaleX(0.9697);transform-origin:0.00px 50%;">688 MB</span>
<div style="left:203px;top:1062px;width:1px;height:12px;background:#f3f3f3;"></div>
<div style="left:911px;top:1056px;width:22px;height:23px;border:1px solid #2a9bd7;background:#e6eef2;box-shadow:inset 0 0 0 3px #cde8f5"></div>
<div style="left:917px;top:1062.8px;width:12px;height:1.2px;background:#0a0a0a;border-radius:0.6px"></div>
<div style="left:917px;top:1065.85px;width:12px;height:1.2px;background:#0a0a0a;border-radius:0.6px"></div>
<div style="left:917px;top:1068.9px;width:12px;height:1.2px;background:#0a0a0a;border-radius:0.6px"></div>
<div style="left:917px;top:1071.95px;width:12px;height:1.2px;background:#0a0a0a;border-radius:0.6px"></div>
<div style="left:938px;top:1061px;width:12px;height:10px;border:1.6px solid #0a0a0a;border-radius:1.2px"></div>
<div style="left:938px;top:1071.9px;width:12px;height:1.3px;background:#0a0a0a;border-radius:0.6px"></div>
<div style="left:931px;top:1px;width:28px;height:1078px;background:linear-gradient(90deg,rgba(0,0,0,0),rgba(0,0,0,0.012) 45%,rgba(0,0,0,0.035) 75%,rgba(0,0,0,0.07))"></div>
<div style="left:961px;top:1px;width:958px;height:39px;background:#e8e8e8;"></div>
<div style="left:961px;top:1px;width:958px;height:1px;background:#efefef;"></div>
<div style="left:961px;top:2px;width:1px;height:37px;background:#eeeeee;"></div>
<div style="left:961px;top:40px;width:958px;height:54px;background:#f9f9f9;"></div>
<div style="left:961px;top:94px;width:958px;height:1px;background:#e3e3e3;"></div>
<svg style="left:961px;top:0px;" width="959" height="42"><path d="M0 40 V39.5 H5.5 A4.5 4.5 0 0 0 10 35 V16.5 A8 8 0 0 1 18 8.5 H243 A8 8 0 0 1 251 16.5 V35 A4.5 4.5 0 0 0 255.5 39.5 H958 V40 Z" fill="#f9f9f9"/><path d="M0 39.5 H5.5 A4.5 4.5 0 0 0 10 35 V16.5 A8 8 0 0 1 18 8.5 H243 A8 8 0 0 1 251 16.5 V35 A4.5 4.5 0 0 0 255.5 39.5 H958" fill="none" stroke="#dddddd" stroke-width="1" transform="translate(-0.5,0)"/></svg>
<svg style="left:979px;top:16px;" width="17" height="14"><g transform="translate(0.9,0.9)"><defs><linearGradient id="gb171" x1="0" y1="0" x2="1" y2="1"><stop offset="0" stop-color="#ffe293"/><stop offset="1" stop-color="#ffcf4c"/></linearGradient></defs><path d="M0 1.2 Q0 0 1.2 0 H6 Q6.6 0 7.1 0.5 L8.4 2 H14.8 Q16 2 16 3.2 V6 H0 Z" fill="#f2b01c"/><path d="M0 3.7 H6.4 L7.8 2.3 H14.8 Q16 2.3 16 3.5 V11.8 Q16 13 14.8 13 H1.2 Q0 13 0 11.8 Z" fill="url(#gb171)"/><path d="M0 11.3 V11.8 Q0 13 1.2 13 H14.8 Q16 13 16 11.8 V11.3 Q16 12.2 14.8 12.2 H1.2 Q0 12.2 0 11.3 Z" fill="#e5a31f"/></g></svg>
<span class="t" style="left:1005.40px;top:16.53px;font-size:12px;color:#000;-webkit-text-stroke:0.2px #000;"><i style="font-style:normal;letter-spacing:-0.462px">on </i><i style="font-style:normal;letter-spacing:0.284px">Environment</i><i style="font-style:normal;margin:0 0.828px">\</i><i style="font-style:normal;letter-spacing:0.259px">amd64</i><i style="font-style:normal;margin:0 0.828px">\</i><i style="font-style:normal;letter-spacing:0.114px">en-us</i></span>
<div style="left:1003px;top:14px;width:9px;height:20px;background:linear-gradient(90deg,#f9f9f9 0,#f9f9f9 35%,rgba(249,249,249,0) 100%)"></div>
<svg style="left:1184px;top:18px;" width="13" height="13"><path d="M1.4 1.4 L9.8 9.8 M9.8 1.4 L1.4 9.8" stroke="#2a2a2a" stroke-width="0.95" fill="none"/></svg>
<svg style="left:1229px;top:18px;" width="14" height="14"><path d="M6.7 1.7 V11.7 M1.7 6.7 H11.7" stroke="#2f2f2f" stroke-width="0.95" fill="none"/></svg>
<div style="left:1800px;top:15px;width:10px;height:1px;background:#777;"></div>
<div style="left:1845px;top:10px;width:10px;height:10px;border:1px solid #747474;border-radius:1.5px"></div>
<svg style="left:1890px;top:9px;" width="13" height="13"><path d="M1 1 L11 11 M11 1 L1 11" stroke="#747474" stroke-width="1" fill="none"/></svg>
<svg style="left:979px;top:57px;" width="21" height="21"><g transform="translate(0.2,0)"><circle cx="10.3" cy="9.6" r="7" fill="none" stroke-linecap="round" stroke-linejoin="round" stroke="#2b2b2b" stroke-width="1"/><path d="M10.3 6 V13.2 M6.7 9.6 H13.9" fill="none" stroke-linecap="round" stroke-linejoin="round" stroke="#0a78d6" stroke-width="1.05"/></g></svg>
<span class="t" style="left:1006.30px;top:60.23px;font-size:12px;color:#1a1a1a;letter-spacing:-0.320px;">New</span>
<div style="left:1060px;top:52px;width:1px;height:31px;background:#e6e6e6;"></div>
<svg style="left:1076px;top:57px;" width="21" height="21"><g transform="translate(0.8,0)"><path d="M5.9 2.4 L12.9 13.4 M14.5 2.4 L7.5 13.4" fill="none" stroke-linecap="round" stroke-linejoin="round" stroke="#2b2b2b" stroke-width="1"/><circle cx="6.3" cy="14.8" r="2.3" fill="none" stroke-linecap="round" stroke-linejoin="round" stroke="#0a78d6" stroke-width="1.3"/><circle cx="14.2" cy="14.8" r="2.3" fill="none" stroke-linecap="round" stroke-linejoin="round" stroke="#0a78d6" stroke-width="1.3"/></g></svg>
<svg style="left:1124px;top:57px;" width="21" height="21"><g transform="translate(0.8,0)"><path d="M6.5 6 H5 Q3.2 6 3.2 7.8 V14.8 Q3.2 16.6 5 16.6 H9.5 Q11 16.6 11.2 15.2" fill="none" stroke-linecap="round" stroke-linejoin="round" stroke="#2b2b2b" stroke-width="1"/><rect x="8.2" y="3.3" width="8.3" height="10.5" rx="2.2" fill="none" stroke-linecap="round" stroke-linejoin="round" stroke="#0a78d6" stroke-width="1.35"/></g></svg>
<svg style="left:1172px;top:57px;" width="21" height="21"><g transform="translate(0.8,0)"><path d="M8 17.2 H5 Q3.6 17.2 3.6 15.8 V5.4 Q3.6 4.2 5 4.2 H6.6 M13.4 4.2 H15 Q16.4 4.2 16.4 5.4 V7" fill="none" stroke-linecap="round" stroke-linejoin="round" stroke="#c8c8c8" stroke-width="1"/><rect x="6.8" y="2.8" width="6.4" height="2.8" rx="1" fill="none" stroke-linecap="round" stroke-linejoin="round" stroke="#c8c8c8" stroke-width="1"/><rect x="9.5" y="7.8" width="7.2" height="9.4" rx="1.4" fill="none" stroke-linecap="round" stroke-linejoin="round" stroke="#9fcbf0" stroke-width="1.25"/></g></svg>
<svg style="left:1220px;top:57px;" width="21" height="21"><g transform="translate(0.8,0)"><path d="M11 4.8 H4.8 Q2.6 4.8 2.6 7 V13.2 Q2.6 15.4 4.8 15.4 H11 M15.4 4.8 H15.6 Q17.8 4.8 17.8 7 V13.2 Q17.8 15.4 15.6 15.4 H15.4" fill="none" stroke-linecap="round" stroke-linejoin="round" stroke="#2b2b2b" stroke-width="1"/><path d="M13.2 2.6 V17.8 M11.4 2.5 H15 M11.4 17.9 H15" fill="none" stroke-linecap="round" stroke-linejoin="round" stroke="#0a78d6" stroke-width="1.15"/><path d="M4.6 13 L7.3 6.8 L10 13 M5.5 11 H9.1" fill="none" stroke-linecap="round" stroke-linejoin="round" stroke="#0a78d6" stroke-width="1.15"/></g></svg>
<svg style="left:1268px;top:57px;" width="21" height="21"><g transform="translate(0.8,0)"><path d="M9 5.2 H5.6 Q3.2 5.2 3.2 7.6 V14.3 Q3.2 16.7 5.6 16.7 H12.8 Q15.2 16.7 15.2 14.3 V13.8" fill="none" stroke-linecap="round" stroke-linejoin="round" stroke="#2b2b2b" stroke-width="1"/><path d="M12.2 3.2 L17.3 7.8 L12.2 12.4 V9.9 Q8.4 9.7 6.4 12.8 Q6.8 6.4 12.2 5.6 Z" fill="none" stroke-linecap="round" stroke-linejoin="round" stroke="#0a78d6" stroke-width="1.25"/></g></svg>
<svg style="left:1316px;top:57px;" width="21" height="21"><g transform="translate(0.8,0)"><path d="M3 5 H17 M8 4.8 Q8 2.6 10 2.6 Q12 2.6 12 4.8 M4.6 5.2 L5.6 15.8 Q5.8 17.4 7.4 17.4 H12.6 Q14.2 17.4 14.4 15.8 L15.4 5.2 M8.6 8.2 V14 M11.4 8.2 V14" fill="none" stroke-linecap="round" stroke-linejoin="round" stroke="#2b2b2b" stroke-width="1"/></g></svg>
<div style="left:1353px;top:52px;width:1px;height:31px;background:#e6e6e6;"></div>
<svg style="left:1367px;top:57px;" width="21" height="21"><g transform="translate(0.8,0)"><path d="M5.95 15.6 V4.7 M2.3 8.2 L5.95 4.55 L9.6 8.2" fill="none" stroke-linecap="round" stroke-linejoin="round" stroke="#2b2b2b" stroke-width="1"/><path d="M13.7 4.6 V15.7 M10.05 12.2 L13.7 15.85 L17.35 12.2" fill="none" stroke-linecap="round" stroke-linejoin="round" stroke="#0a78d6" stroke-width="1.25"/></g></svg>
<span class="t" style="left:1394.20px;top:60.23px;font-size:12px;color:#1a1a1a;letter-spacing:-0.358px;">Sort</span>
<svg style="left:1419px;top:61px;" width="13" height="13"><g transform="translate(0.8,0.3)"><path d="M3.4 4.6 L6 7.4 L8.6 4.6" fill="none" stroke="#777" stroke-width="1" stroke-linecap="round" stroke-linejoin="round"/></g></svg>
<svg style="left:1455px;top:57px;" width="21" height="21"><g transform="translate(0.8,0)"><path d="M2.3 5.8 H17.9 M2.3 8.6 H17.9 M2.3 11.5 H17.9 M2.3 14.3 H17.9" fill="none" stroke-linecap="round" stroke-linejoin="round" stroke="#3a3a3a" stroke-width="0.9"/></g></svg>
<span class="t" style="left:1482.00px;top:60.23px;font-size:12px;color:#1a1a1a;letter-spacing:-0.109px;">View</span>
<div style="left:1537px;top:52px;width:1px;height:31px;background:#e6e6e6;"></div>
<svg style="left:1550px;top:62px;" width="25" height="13"><circle cx="5.4" cy="5.6" r="1.3" fill="#111"/><circle cx="11.9" cy="5.6" r="1.3" fill="#111"/><circle cx="18.4" cy="5.6" r="1.3" fill="#111"/></svg>
<svg style="left:974px;top:114px;" width="17" height="17"><path d="M13.7 8 H2.4 M6.9 3.4 L2.3 8 L6.9 12.6" fill="none" stroke-linecap="round" stroke-linejoin="round" stroke="#585858" stroke-width="1.1"/></svg>
<svg style="left:1009px;top:114px;" width="17" height="17"><path d="M2.3 8 H13.6 M9.1 3.4 L13.7 8 L9.1 12.6" fill="none" stroke-linecap="round" stroke-linejoin="round" stroke="#a4a4a4" stroke-width="1.1"/></svg>
<svg style="left:1041px;top:116px;" width="13" height="13"><g transform="translate(0.3,0.4)"><path d="M2.4 4.1 L6 7.9 L9.6 4.1" fill="none" stroke="#5c5c5c" stroke-width="1.1" stroke-linecap="round" stroke-linejoin="round"/></g></svg>
<svg style="left:1068px;top:114px;" width="17" height="17"><g transform="translate(0.5,0)"><path d="M8 13.6 V2.9 M3.1 7.6 L8 2.7 L12.9 7.6" fill="none" stroke-linecap="round" stroke-linejoin="round" stroke="#585858" stroke-width="1.1"/></g></svg>
<div style="left:1098px;top:105px;width:295px;height:34px;border:1px solid #d9d9d9;background:#fff"></div>
<svg style="left:1107px;top:114px;" width="16" height="13"><g transform="translate(0.2,0.1)"><defs><linearGradient id="g201" x1="0" y1="0" x2="1" y2="1"><stop offset="0" stop-color="#ffe293"/><stop offset="1" stop-color="#ffcf4c"/></linearGradient></defs><path d="M0.6 1.1 Q0.6 0.3 1.4 0.3 L5.2 0.3 Q5.8 0.3 6.3 0.8 L7.2 1.7 L13.6 1.7 Q14.4 1.7 14.4 2.5 L14.4 5 L0.6 5 Z" fill="#f5b619"/><path d="M0.6 3.2 L6 3.2 L7 1.9 L13.6 1.9 Q14.4 1.9 14.4 2.7 L14.4 10.9 Q14.4 11.7 13.6 11.7 L1.4 11.7 Q0.6 11.7 0.6 10.9 Z" fill="url(#g201)"/></g></svg>
<span class="t" style="left:1128.20px;top:112.23px;font-size:12px;color:#222;transform:scaleX(1.22);transform-origin:0 50%;">«</span>
<span class="t" style="left:1144.20px;top:114.33px;font-size:12px;color:#000;letter-spacing:-0.304px;">amd64</span>
<svg style="left:1185px;top:116px;" width="13" height="13"><g transform="translate(0.0,0.4)"><path d="M4.65 3.3 L7.35 6 L4.65 8.7" fill="none" stroke="#505050" stroke-width="1.5" stroke-linecap="round" stroke-linejoin="round"/></g></svg>
<span class="t" style="left:1203.20px;top:114.33px;font-size:12px;color:#000;letter-spacing:-0.179px;">en-us</span>
<svg style="left:1329px;top:117px;" width="13" height="13"><g transform="translate(0.5,0)"><path d="M2.4 4.1 L6 7.9 L9.6 4.1" fill="none" stroke="#555" stroke-width="1.15" stroke-linecap="round" stroke-linejoin="round"/></g></svg>
<svg style="left:1364px;top:115px;" width="17" height="17"><g transform="translate(0.5,0)"><path d="M12.6 4.2 A5.6 5.6 0 1 0 13.6 8.6" fill="none" stroke-linecap="round" stroke-linejoin="round" stroke="#666" stroke-width="1.1"/><path d="M13 1.6 V4.6 H10" fill="none" stroke-linecap="round" stroke-linejoin="round" stroke="#666" stroke-width="1.1"/></g></svg>
<div style="left:1405px;top:105px;width:502px;height:34px;border:1px solid #d9d9d9;background:#fff"></div>
<span class="t" style="left:1413.80px;top:114.33px;font-size:12px;color:#6b6b6b;letter-spacing:-0.261px;">Search en-us</span>
<svg style="left:1879px;top:115px;" width="15" height="15"><circle cx="8.9" cy="5.7" r="3.3" fill="none" stroke-linecap="round" stroke-linejoin="round" stroke="#5a5a5a" stroke-width="1.7"/><path d="M6.3 8.3 L2 12.6" fill="none" stroke-linecap="round" stroke-linejoin="round" stroke="#5a5a5a" stroke-width="2"/></svg>
<svg style="left:1003px;top:159px;" width="13" height="13"><g transform="translate(0.6,0.6)"><path d="M2.3 4.25 L6 7.75 L9.7 4.25" fill="none" stroke="#1a1a1a" stroke-width="1.45" stroke-linecap="round" stroke-linejoin="round"/></g></svg>
<svg style="left:1027px;top:159px;" width="16" height="13"><g transform="translate(0.4,0.2)"><defs><linearGradient id="g212" x1="0" y1="0" x2="1" y2="1"><stop offset="0" stop-color="#ffe293"/><stop offset="1" stop-color="#ffcf4c"/></linearGradient></defs><path d="M0.6 1.1 Q0.6 0.3 1.4 0.3 L5.2 0.3 Q5.8 0.3 6.3 0.8 L7.2 1.7 L13.6 1.7 Q14.4 1.7 14.4 2.5 L14.4 5 L0.6 5 Z" fill="#f5b619"/><path d="M0.6 3.2 L6 3.2 L7 1.9 L13.6 1.9 Q14.4 1.9 14.4 2.7 L14.4 10.9 Q14.4 11.7 13.6 11.7 L1.4 11.7 Q0.6 11.7 0.6 10.9 Z" fill="url(#g212)"/></g></svg>
<span class="t" style="left:1048.30px;top:158.23px;font-size:12px;color:#000;letter-spacing:-0.129px;">Windows Kits</span>
<svg style="left:1011px;top:191px;" width="13" height="13"><g transform="translate(0.6,0.6)"><path d="M2.3 4.25 L6 7.75 L9.7 4.25" fill="none" stroke="#1a1a1a" stroke-width="1.45" stroke-linecap="round" stroke-linejoin="round"/></g></svg>
<svg style="left:1035px;top:191px;" width="16" height="13"><g transform="translate(0.4,0.2)"><defs><linearGradient id="g215" x1="0" y1="0" x2="1" y2="1"><stop offset="0" stop-color="#ffe293"/><stop offset="1" stop-color="#ffcf4c"/></linearGradient></defs><path d="M0.6 1.1 Q0.6 0.3 1.4 0.3 L5.2 0.3 Q5.8 0.3 6.3 0.8 L7.2 1.7 L13.6 1.7 Q14.4 1.7 14.4 2.5 L14.4 5 L0.6 5 Z" fill="#f5b619"/><path d="M0.6 3.2 L6 3.2 L7 1.9 L13.6 1.9 Q14.4 1.9 14.4 2.7 L14.4 10.9 Q14.4 11.7 13.6 11.7 L1.4 11.7 Q0.6 11.7 0.6 10.9 Z" fill="url(#g215)"/></g></svg>
<span class="t" style="left:1056.30px;top:190.23px;font-size:12px;color:#000;letter-spacing:-0.350px;transform:scaleX(0.8856);transform-origin:0.00px 50%;">10</span>
<svg style="left:1019px;top:223px;" width="13" height="13"><g transform="translate(0.6,0.6)"><path d="M2.3 4.25 L6 7.75 L9.7 4.25" fill="none" stroke="#1a1a1a" stroke-width="1.45" stroke-linecap="round" stroke-linejoin="round"/></g></svg>
<svg style="left:1043px;top:223px;" width="16" height="13"><g transform="translate(0.4,0.2)"><defs><linearGradient id="g218" x1="0" y1="0" x2="1" y2="1"><stop offset="0" stop-color="#ffe293"/><stop offset="1" stop-color="#ffcf4c"/></linearGradient></defs><path d="M0.6 1.1 Q0.6 0.3 1.4 0.3 L5.2 0.3 Q5.8 0.3 6.3 0.8 L7.2 1.7 L13.6 1.7 Q14.4 1.7 14.4 2.5 L14.4 5 L0.6 5 Z" fill="#f5b619"/><path d="M0.6 3.2 L6 3.2 L7 1.9 L13.6 1.9 Q14.4 1.9 14.4 2.7 L14.4 10.9 Q14.4 11.7 13.6 11.7 L1.4 11.7 Q0.6 11.7 0.6 10.9 Z" fill="url(#g218)"/></g></svg>
<span class="t" style="left:1064.30px;top:222.23px;font-size:12px;color:#000;letter-spacing:-0.160px;">Assessment and Deployment Kit</span>
<svg style="left:1027px;top:256px;" width="13" height="13"><g transform="translate(0.6,0.7)"><path d="M4.2 2.4 L7.8 6 L4.2 9.6" fill="none" stroke="#858585" stroke-width="1.55" stroke-linecap="round" stroke-linejoin="round"/></g></svg>
<svg style="left:1051px;top:255px;" width="16" height="13"><g transform="translate(0.4,0.2)"><defs><linearGradient id="g221" x1="0" y1="0" x2="1" y2="1"><stop offset="0" stop-color="#ffe293"/><stop offset="1" stop-color="#ffcf4c"/></linearGradient></defs><path d="M0.6 1.1 Q0.6 0.3 1.4 0.3 L5.2 0.3 Q5.8 0.3 6.3 0.8 L7.2 1.7 L13.6 1.7 Q14.4 1.7 14.4 2.5 L14.4 5 L0.6 5 Z" fill="#f5b619"/><path d="M0.6 3.2 L6 3.2 L7 1.9 L13.6 1.9 Q14.4 1.9 14.4 2.7 L14.4 10.9 Q14.4 11.7 13.6 11.7 L1.4 11.7 Q0.6 11.7 0.6 10.9 Z" fill="url(#g221)"/></g></svg>
<span class="t" style="left:1072.30px;top:254.23px;font-size:12px;color:#000;letter-spacing:0.439px;">Common</span>
<svg style="left:1027px;top:288px;" width="13" height="13"><g transform="translate(0.6,0.7)"><path d="M4.2 2.4 L7.8 6 L4.2 9.6" fill="none" stroke="#858585" stroke-width="1.55" stroke-linecap="round" stroke-linejoin="round"/></g></svg>
<svg style="left:1051px;top:287px;" width="16" height="13"><g transform="translate(0.4,0.2)"><defs><linearGradient id="g224" x1="0" y1="0" x2="1" y2="1"><stop offset="0" stop-color="#ffe293"/><stop offset="1" stop-color="#ffcf4c"/></linearGradient></defs><path d="M0.6 1.1 Q0.6 0.3 1.4 0.3 L5.2 0.3 Q5.8 0.3 6.3 0.8 L7.2 1.7 L13.6 1.7 Q14.4 1.7 14.4 2.5 L14.4 5 L0.6 5 Z" fill="#f5b619"/><path d="M0.6 3.2 L6 3.2 L7 1.9 L13.6 1.9 Q14.4 1.9 14.4 2.7 L14.4 10.9 Q14.4 11.7 13.6 11.7 L1.4 11.7 Q0.6 11.7 0.6 10.9 Z" fill="url(#g224)"/></g></svg>
<span class="t" style="left:1072.30px;top:286.23px;font-size:12px;color:#000;letter-spacing:-0.052px;">Deployment Tools</span>
<svg style="left:1027px;top:320px;" width="13" height="13"><g transform="translate(0.6,0.7)"><path d="M4.2 2.4 L7.8 6 L4.2 9.6" fill="none" stroke="#858585" stroke-width="1.55" stroke-linecap="round" stroke-linejoin="round"/></g></svg>
<svg style="left:1051px;top:319px;" width="16" height="13"><g transform="translate(0.4,0.2)"><defs><linearGradient id="g227" x1="0" y1="0" x2="1" y2="1"><stop offset="0" stop-color="#ffe293"/><stop offset="1" stop-color="#ffcf4c"/></linearGradient></defs><path d="M0.6 1.1 Q0.6 0.3 1.4 0.3 L5.2 0.3 Q5.8 0.3 6.3 0.8 L7.2 1.7 L13.6 1.7 Q14.4 1.7 14.4 2.5 L14.4 5 L0.6 5 Z" fill="#f5b619"/><path d="M0.6 3.2 L6 3.2 L7 1.9 L13.6 1.9 Q14.4 1.9 14.4 2.7 L14.4 10.9 Q14.4 11.7 13.6 11.7 L1.4 11.7 Q0.6 11.7 0.6 10.9 Z" fill="url(#g227)"/></g></svg>
<span class="t" style="left:1072.30px;top:318.23px;font-size:12px;color:#000;letter-spacing:-0.350px;transform:scaleX(0.9700);transform-origin:0.00px 50%;">Docs</span>
<svg style="left:1027px;top:352px;" width="13" height="13"><g transform="translate(0.6,0.7)"><path d="M4.2 2.4 L7.8 6 L4.2 9.6" fill="none" stroke="#858585" stroke-width="1.55" stroke-linecap="round" stroke-linejoin="round"/></g></svg>
<svg style="left:1051px;top:351px;" width="16" height="13"><g transform="translate(0.4,0.2)"><defs><linearGradient id="g230" x1="0" y1="0" x2="1" y2="1"><stop offset="0" stop-color="#ffe293"/><stop offset="1" stop-color="#ffcf4c"/></linearGradient></defs><path d="M0.6 1.1 Q0.6 0.3 1.4 0.3 L5.2 0.3 Q5.8 0.3 6.3 0.8 L7.2 1.7 L13.6 1.7 Q14.4 1.7 14.4 2.5 L14.4 5 L0.6 5 Z" fill="#f5b619"/><path d="M0.6 3.2 L6 3.2 L7 1.9 L13.6 1.9 Q14.4 1.9 14.4 2.7 L14.4 10.9 Q14.4 11.7 13.6 11.7 L1.4 11.7 Q0.6 11.7 0.6 10.9 Z" fill="url(#g230)"/></g></svg>
<span class="t" style="left:1071.30px;top:350.23px;font-size:12px;color:#000;letter-spacing:0.048px;">Imaging and Configuration Designer</span>
<svg style="left:1027px;top:384px;" width="13" height="13"><g transform="translate(0.6,0.7)"><path d="M4.2 2.4 L7.8 6 L4.2 9.6" fill="none" stroke="#858585" stroke-width="1.55" stroke-linecap="round" stroke-linejoin="round"/></g></svg>
<svg style="left:1051px;top:383px;" width="16" height="13"><g transform="translate(0.4,0.2)"><defs><linearGradient id="g233" x1="0" y1="0" x2="1" y2="1"><stop offset="0" stop-color="#ffe293"/><stop offset="1" stop-color="#ffcf4c"/></linearGradient></defs><path d="M0.6 1.1 Q0.6 0.3 1.4 0.3 L5.2 0.3 Q5.8 0.3 6.3 0.8 L7.2 1.7 L13.6 1.7 Q14.4 1.7 14.4 2.5 L14.4 5 L0.6 5 Z" fill="#f5b619"/><path d="M0.6 3.2 L6 3.2 L7 1.9 L13.6 1.9 Q14.4 1.9 14.4 2.7 L14.4 10.9 Q14.4 11.7 13.6 11.7 L1.4 11.7 Q0.6 11.7 0.6 10.9 Z" fill="url(#g233)"/></g></svg>
<span class="t" style="left:1072.30px;top:382.23px;font-size:12px;color:#000;letter-spacing:-0.102px;">User State Migration Tool</span>
<svg style="left:1027px;top:416px;" width="13" height="13"><g transform="translate(0.6,0.7)"><path d="M4.2 2.4 L7.8 6 L4.2 9.6" fill="none" stroke="#858585" stroke-width="1.55" stroke-linecap="round" stroke-linejoin="round"/></g></svg>
<svg style="left:1051px;top:415px;" width="16" height="13"><g transform="translate(0.4,0.2)"><defs><linearGradient id="g236" x1="0" y1="0" x2="1" y2="1"><stop offset="0" stop-color="#ffe293"/><stop offset="1" stop-color="#ffcf4c"/></linearGradient></defs><path d="M0.6 1.1 Q0.6 0.3 1.4 0.3 L5.2 0.3 Q5.8 0.3 6.3 0.8 L7.2 1.7 L13.6 1.7 Q14.4 1.7 14.4 2.5 L14.4 5 L0.6 5 Z" fill="#f5b619"/><path d="M0.6 3.2 L6 3.2 L7 1.9 L13.6 1.9 Q14.4 1.9 14.4 2.7 L14.4 10.9 Q14.4 11.7 13.6 11.7 L1.4 11.7 Q0.6 11.7 0.6 10.9 Z" fill="url(#g236)"/></g></svg>
<span class="t" style="left:1072.30px;top:414.23px;font-size:12px;color:#000;letter-spacing:-0.151px;">Windows Assessment Toolkit</span>
<svg style="left:1027px;top:447px;" width="13" height="13"><g transform="translate(0.6,0.6)"><path d="M2.3 4.25 L6 7.75 L9.7 4.25" fill="none" stroke="#1a1a1a" stroke-width="1.45" stroke-linecap="round" stroke-linejoin="round"/></g></svg>
<svg style="left:1051px;top:447px;" width="16" height="13"><g transform="translate(0.4,0.2)"><defs><linearGradient id="g239" x1="0" y1="0" x2="1" y2="1"><stop offset="0" stop-color="#ffe293"/><stop offset="1" stop-color="#ffcf4c"/></linearGradient></defs><path d="M0.6 1.1 Q0.6 0.3 1.4 0.3 L5.2 0.3 Q5.8 0.3 6.3 0.8 L7.2 1.7 L13.6 1.7 Q14.4 1.7 14.4 2.5 L14.4 5 L0.6 5 Z" fill="#f5b619"/><path d="M0.6 3.2 L6 3.2 L7 1.9 L13.6 1.9 Q14.4 1.9 14.4 2.7 L14.4 10.9 Q14.4 11.7 13.6 11.7 L1.4 11.7 Q0.6 11.7 0.6 10.9 Z" fill="url(#g239)"/></g></svg>
<span class="t" style="left:1072.30px;top:446.23px;font-size:12px;color:#000;letter-spacing:-0.040px;">Windows Preinstallation Environment</span>
<svg style="left:1035px;top:479px;" width="13" height="13"><g transform="translate(0.6,0.6)"><path d="M2.3 4.25 L6 7.75 L9.7 4.25" fill="none" stroke="#1a1a1a" stroke-width="1.45" stroke-linecap="round" stroke-linejoin="round"/></g></svg>
<svg style="left:1059px;top:479px;" width="16" height="13"><g transform="translate(0.4,0.2)"><defs><linearGradient id="g242" x1="0" y1="0" x2="1" y2="1"><stop offset="0" stop-color="#ffe293"/><stop offset="1" stop-color="#ffcf4c"/></linearGradient></defs><path d="M0.6 1.1 Q0.6 0.3 1.4 0.3 L5.2 0.3 Q5.8 0.3 6.3 0.8 L7.2 1.7 L13.6 1.7 Q14.4 1.7 14.4 2.5 L14.4 5 L0.6 5 Z" fill="#f5b619"/><path d="M0.6 3.2 L6 3.2 L7 1.9 L13.6 1.9 Q14.4 1.9 14.4 2.7 L14.4 10.9 Q14.4 11.7 13.6 11.7 L1.4 11.7 Q0.6 11.7 0.6 10.9 Z" fill="url(#g242)"/></g></svg>
<span class="t" style="left:1080.30px;top:478.23px;font-size:12px;color:#000;letter-spacing:-0.379px;">amd64</span>
<div style="left:963px;top:502px;width:353px;height:32px;background:#d9d9d9;border-radius:2.5px"></div>
<svg style="left:1067px;top:511px;" width="16" height="13"><g transform="translate(0.4,0.2)"><defs><linearGradient id="g245" x1="0" y1="0" x2="1" y2="1"><stop offset="0" stop-color="#ffe293"/><stop offset="1" stop-color="#ffcf4c"/></linearGradient></defs><path d="M0.6 1.1 Q0.6 0.3 1.4 0.3 L5.2 0.3 Q5.8 0.3 6.3 0.8 L7.2 1.7 L13.6 1.7 Q14.4 1.7 14.4 2.5 L14.4 5 L0.6 5 Z" fill="#f5b619"/><path d="M0.6 3.2 L6 3.2 L7 1.9 L13.6 1.9 Q14.4 1.9 14.4 2.7 L14.4 10.9 Q14.4 11.7 13.6 11.7 L1.4 11.7 Q0.6 11.7 0.6 10.9 Z" fill="url(#g245)"/></g></svg>
<span class="t" style="left:1088.30px;top:510.23px;font-size:12px;color:#000;letter-spacing:-0.129px;">en-us</span>
<svg style="left:1043px;top:544px;" width="13" height="13"><g transform="translate(0.6,0.7)"><path d="M4.2 2.4 L7.8 6 L4.2 9.6" fill="none" stroke="#858585" stroke-width="1.55" stroke-linecap="round" stroke-linejoin="round"/></g></svg>
<svg style="left:1067px;top:543px;" width="16" height="13"><g transform="translate(0.4,0.2)"><defs><linearGradient id="g248" x1="0" y1="0" x2="1" y2="1"><stop offset="0" stop-color="#ffe293"/><stop offset="1" stop-color="#ffcf4c"/></linearGradient></defs><path d="M0.6 1.1 Q0.6 0.3 1.4 0.3 L5.2 0.3 Q5.8 0.3 6.3 0.8 L7.2 1.7 L13.6 1.7 Q14.4 1.7 14.4 2.5 L14.4 5 L0.6 5 Z" fill="#f5b619"/><path d="M0.6 3.2 L6 3.2 L7 1.9 L13.6 1.9 Q14.4 1.9 14.4 2.7 L14.4 10.9 Q14.4 11.7 13.6 11.7 L1.4 11.7 Q0.6 11.7 0.6 10.9 Z" fill="url(#g248)"/></g></svg>
<span class="t" style="left:1088.30px;top:542.23px;font-size:12px;color:#000;letter-spacing:-0.177px;">Media</span>
<svg style="left:1043px;top:576px;" width="13" height="13"><g transform="translate(0.6,0.7)"><path d="M4.2 2.4 L7.8 6 L4.2 9.6" fill="none" stroke="#858585" stroke-width="1.55" stroke-linecap="round" stroke-linejoin="round"/></g></svg>
<svg style="left:1067px;top:575px;" width="16" height="13"><g transform="translate(0.4,0.2)"><defs><linearGradient id="g251" x1="0" y1="0" x2="1" y2="1"><stop offset="0" stop-color="#ffe293"/><stop offset="1" stop-color="#ffcf4c"/></linearGradient></defs><path d="M0.6 1.1 Q0.6 0.3 1.4 0.3 L5.2 0.3 Q5.8 0.3 6.3 0.8 L7.2 1.7 L13.6 1.7 Q14.4 1.7 14.4 2.5 L14.4 5 L0.6 5 Z" fill="#f5b619"/><path d="M0.6 3.2 L6 3.2 L7 1.9 L13.6 1.9 Q14.4 1.9 14.4 2.7 L14.4 10.9 Q14.4 11.7 13.6 11.7 L1.4 11.7 Q0.6 11.7 0.6 10.9 Z" fill="url(#g251)"/></g></svg>
<span class="t" style="left:1088.30px;top:574.23px;font-size:12px;color:#000;letter-spacing:-0.350px;transform:scaleX(0.9388);transform-origin:0.00px 50%;">WinPE_OCs</span>
<svg style="left:1035px;top:608px;" width="13" height="13"><g transform="translate(0.6,0.7)"><path d="M4.2 2.4 L7.8 6 L4.2 9.6" fill="none" stroke="#858585" stroke-width="1.55" stroke-linecap="round" stroke-linejoin="round"/></g></svg>
<svg style="left:1059px;top:607px;" width="16" height="13"><g transform="translate(0.4,0.2)"><defs><linearGradient id="g254" x1="0" y1="0" x2="1" y2="1"><stop offset="0" stop-color="#ffe293"/><stop offset="1" stop-color="#ffcf4c"/></linearGradient></defs><path d="M0.6 1.1 Q0.6 0.3 1.4 0.3 L5.2 0.3 Q5.8 0.3 6.3 0.8 L7.2 1.7 L13.6 1.7 Q14.4 1.7 14.4 2.5 L14.4 5 L0.6 5 Z" fill="#f5b619"/><path d="M0.6 3.2 L6 3.2 L7 1.9 L13.6 1.9 Q14.4 1.9 14.4 2.7 L14.4 10.9 Q14.4 11.7 13.6 11.7 L1.4 11.7 Q0.6 11.7 0.6 10.9 Z" fill="url(#g254)"/></g></svg>
<span class="t" style="left:1080.30px;top:606.23px;font-size:12px;color:#000;letter-spacing:-0.061px;">amd64 - Copy</span>
<svg style="left:1035px;top:640px;" width="13" height="13"><g transform="translate(0.6,0.7)"><path d="M4.2 2.4 L7.8 6 L4.2 9.6" fill="none" stroke="#858585" stroke-width="1.55" stroke-linecap="round" stroke-linejoin="round"/></g></svg>
<svg style="left:1059px;top:639px;" width="16" height="13"><g transform="translate(0.4,0.2)"><defs><linearGradient id="g257" x1="0" y1="0" x2="1" y2="1"><stop offset="0" stop-color="#ffe293"/><stop offset="1" stop-color="#ffcf4c"/></linearGradient></defs><path d="M0.6 1.1 Q0.6 0.3 1.4 0.3 L5.2 0.3 Q5.8 0.3 6.3 0.8 L7.2 1.7 L13.6 1.7 Q14.4 1.7 14.4 2.5 L14.4 5 L0.6 5 Z" fill="#f5b619"/><path d="M0.6 3.2 L6 3.2 L7 1.9 L13.6 1.9 Q14.4 1.9 14.4 2.7 L14.4 10.9 Q14.4 11.7 13.6 11.7 L1.4 11.7 Q0.6 11.7 0.6 10.9 Z" fill="url(#g257)"/></g></svg>
<span class="t" style="left:1080.30px;top:638.23px;font-size:12px;color:#000;letter-spacing:-0.460px;">arm64</span>
<svg style="left:1027px;top:672px;" width="13" height="13"><g transform="translate(0.6,0.7)"><path d="M4.2 2.4 L7.8 6 L4.2 9.6" fill="none" stroke="#858585" stroke-width="1.55" stroke-linecap="round" stroke-linejoin="round"/></g></svg>
<svg style="left:1051px;top:671px;" width="16" height="13"><g transform="translate(0.4,0.2)"><defs><linearGradient id="g260" x1="0" y1="0" x2="1" y2="1"><stop offset="0" stop-color="#ffe293"/><stop offset="1" stop-color="#ffcf4c"/></linearGradient></defs><path d="M0.6 1.1 Q0.6 0.3 1.4 0.3 L5.2 0.3 Q5.8 0.3 6.3 0.8 L7.2 1.7 L13.6 1.7 Q14.4 1.7 14.4 2.5 L14.4 5 L0.6 5 Z" fill="#f5b619"/><path d="M0.6 3.2 L6 3.2 L7 1.9 L13.6 1.9 Q14.4 1.9 14.4 2.7 L14.4 10.9 Q14.4 11.7 13.6 11.7 L1.4 11.7 Q0.6 11.7 0.6 10.9 Z" fill="url(#g260)"/></g></svg>
<span class="t" style="left:1072.30px;top:670.23px;font-size:12px;color:#000;letter-spacing:-0.200px;">Windows Setup</span>
<svg style="left:1043px;top:703px;" width="16" height="13"><g transform="translate(0.4,0.2)"><defs><linearGradient id="g262" x1="0" y1="0" x2="1" y2="1"><stop offset="0" stop-color="#ffe293"/><stop offset="1" stop-color="#ffcf4c"/></linearGradient></defs><path d="M0.6 1.1 Q0.6 0.3 1.4 0.3 L5.2 0.3 Q5.8 0.3 6.3 0.8 L7.2 1.7 L13.6 1.7 Q14.4 1.7 14.4 2.5 L14.4 5 L0.6 5 Z" fill="#f5b619"/><path d="M0.6 3.2 L6 3.2 L7 1.9 L13.6 1.9 Q14.4 1.9 14.4 2.7 L14.4 10.9 Q14.4 11.7 13.6 11.7 L1.4 11.7 Q0.6 11.7 0.6 10.9 Z" fill="url(#g262)"/></g></svg>
<span class="t" style="left:1064.30px;top:702.23px;font-size:12px;color:#000;letter-spacing:-0.237px;">Catalogs</span>
<svg style="left:1019px;top:736px;" width="13" height="13"><g transform="translate(0.6,0.7)"><path d="M4.2 2.4 L7.8 6 L4.2 9.6" fill="none" stroke="#858585" stroke-width="1.55" stroke-linecap="round" stroke-linejoin="round"/></g></svg>
<svg style="left:1043px;top:735px;" width="16" height="13"><g transform="translate(0.4,0.2)"><defs><linearGradient id="g265" x1="0" y1="0" x2="1" y2="1"><stop offset="0" stop-color="#ffe293"/><stop offset="1" stop-color="#ffcf4c"/></linearGradient></defs><path d="M0.6 1.1 Q0.6 0.3 1.4 0.3 L5.2 0.3 Q5.8 0.3 6.3 0.8 L7.2 1.7 L13.6 1.7 Q14.4 1.7 14.4 2.5 L14.4 5 L0.6 5 Z" fill="#f5b619"/><path d="M0.6 3.2 L6 3.2 L7 1.9 L13.6 1.9 Q14.4 1.9 14.4 2.7 L14.4 10.9 Q14.4 11.7 13.6 11.7 L1.4 11.7 Q0.6 11.7 0.6 10.9 Z" fill="url(#g265)"/></g></svg>
<span class="t" style="left:1064.30px;top:734.23px;font-size:12px;color:#000;letter-spacing:-0.226px;">Debuggers</span>
<svg style="left:1019px;top:768px;" width="13" height="13"><g transform="translate(0.6,0.7)"><path d="M4.2 2.4 L7.8 6 L4.2 9.6" fill="none" stroke="#858585" stroke-width="1.55" stroke-linecap="round" stroke-linejoin="round"/></g></svg>
<svg style="left:1043px;top:767px;" width="16" height="13"><g transform="translate(0.4,0.2)"><defs><linearGradient id="g268" x1="0" y1="0" x2="1" y2="1"><stop offset="0" stop-color="#ffe293"/><stop offset="1" stop-color="#ffcf4c"/></linearGradient></defs><path d="M0.6 1.1 Q0.6 0.3 1.4 0.3 L5.2 0.3 Q5.8 0.3 6.3 0.8 L7.2 1.7 L13.6 1.7 Q14.4 1.7 14.4 2.5 L14.4 5 L0.6 5 Z" fill="#f5b619"/><path d="M0.6 3.2 L6 3.2 L7 1.9 L13.6 1.9 Q14.4 1.9 14.4 2.7 L14.4 10.9 Q14.4 11.7 13.6 11.7 L1.4 11.7 Q0.6 11.7 0.6 10.9 Z" fill="url(#g268)"/></g></svg>
<span class="t" style="left:1064.30px;top:766.23px;font-size:12px;color:#000;letter-spacing:-0.547px;">Docs</span>
<svg style="left:1019px;top:800px;" width="13" height="13"><g transform="translate(0.6,0.7)"><path d="M4.2 2.4 L7.8 6 L4.2 9.6" fill="none" stroke="#858585" stroke-width="1.55" stroke-linecap="round" stroke-linejoin="round"/></g></svg>
<svg style="left:1043px;top:799px;" width="16" height="13"><g transform="translate(0.4,0.2)"><defs><linearGradient id="g271" x1="0" y1="0" x2="1" y2="1"><stop offset="0" stop-color="#ffe293"/><stop offset="1" stop-color="#ffcf4c"/></linearGradient></defs><path d="M0.6 1.1 Q0.6 0.3 1.4 0.3 L5.2 0.3 Q5.8 0.3 6.3 0.8 L7.2 1.7 L13.6 1.7 Q14.4 1.7 14.4 2.5 L14.4 5 L0.6 5 Z" fill="#f5b619"/><path d="M0.6 3.2 L6 3.2 L7 1.9 L13.6 1.9 Q14.4 1.9 14.4 2.7 L14.4 10.9 Q14.4 11.7 13.6 11.7 L1.4 11.7 Q0.6 11.7 0.6 10.9 Z" fill="url(#g271)"/></g></svg>
<span class="t" style="left:1064.30px;top:798.23px;font-size:12px;color:#000;letter-spacing:0.124px;">Microsoft Application Virtualization</span>
<svg style="left:1019px;top:832px;" width="13" height="13"><g transform="translate(0.6,0.7)"><path d="M4.2 2.4 L7.8 6 L4.2 9.6" fill="none" stroke="#858585" stroke-width="1.55" stroke-linecap="round" stroke-linejoin="round"/></g></svg>
<svg style="left:1043px;top:831px;" width="16" height="13"><g transform="translate(0.4,0.2)"><defs><linearGradient id="g274" x1="0" y1="0" x2="1" y2="1"><stop offset="0" stop-color="#ffe293"/><stop offset="1" stop-color="#ffcf4c"/></linearGradient></defs><path d="M0.6 1.1 Q0.6 0.3 1.4 0.3 L5.2 0.3 Q5.8 0.3 6.3 0.8 L7.2 1.7 L13.6 1.7 Q14.4 1.7 14.4 2.5 L14.4 5 L0.6 5 Z" fill="#f5b619"/><path d="M0.6 3.2 L6 3.2 L7 1.9 L13.6 1.9 Q14.4 1.9 14.4 2.7 L14.4 10.9 Q14.4 11.7 13.6 11.7 L1.4 11.7 Q0.6 11.7 0.6 10.9 Z" fill="url(#g274)"/></g></svg>
<span class="t" style="left:1064.30px;top:830.23px;font-size:12px;color:#000;letter-spacing:-0.091px;">Microsoft User Experience Virtualization</span>
<svg style="left:1019px;top:864px;" width="13" height="13"><g transform="translate(0.6,0.7)"><path d="M4.2 2.4 L7.8 6 L4.2 9.6" fill="none" stroke="#858585" stroke-width="1.55" stroke-linecap="round" stroke-linejoin="round"/></g></svg>
<svg style="left:1043px;top:863px;" width="16" height="13"><g transform="translate(0.4,0.2)"><defs><linearGradient id="g277" x1="0" y1="0" x2="1" y2="1"><stop offset="0" stop-color="#ffe293"/><stop offset="1" stop-color="#ffcf4c"/></linearGradient></defs><path d="M0.6 1.1 Q0.6 0.3 1.4 0.3 L5.2 0.3 Q5.8 0.3 6.3 0.8 L7.2 1.7 L13.6 1.7 Q14.4 1.7 14.4 2.5 L14.4 5 L0.6 5 Z" fill="#f5b619"/><path d="M0.6 3.2 L6 3.2 L7 1.9 L13.6 1.9 Q14.4 1.9 14.4 2.7 L14.4 10.9 Q14.4 11.7 13.6 11.7 L1.4 11.7 Q0.6 11.7 0.6 10.9 Z" fill="url(#g277)"/></g></svg>
<span class="t" style="left:1064.30px;top:862.23px;font-size:12px;color:#000;letter-spacing:-0.353px;">Tools</span>
<svg style="left:1019px;top:896px;" width="13" height="13"><g transform="translate(0.6,0.7)"><path d="M4.2 2.4 L7.8 6 L4.2 9.6" fill="none" stroke="#858585" stroke-width="1.55" stroke-linecap="round" stroke-linejoin="round"/></g></svg>
<svg style="left:1043px;top:895px;" width="16" height="13"><g transform="translate(0.4,0.2)"><defs><linearGradient id="g280" x1="0" y1="0" x2="1" y2="1"><stop offset="0" stop-color="#ffe293"/><stop offset="1" stop-color="#ffcf4c"/></linearGradient></defs><path d="M0.6 1.1 Q0.6 0.3 1.4 0.3 L5.2 0.3 Q5.8 0.3 6.3 0.8 L7.2 1.7 L13.6 1.7 Q14.4 1.7 14.4 2.5 L14.4 5 L0.6 5 Z" fill="#f5b619"/><path d="M0.6 3.2 L6 3.2 L7 1.9 L13.6 1.9 Q14.4 1.9 14.4 2.7 L14.4 10.9 Q14.4 11.7 13.6 11.7 L1.4 11.7 Q0.6 11.7 0.6 10.9 Z" fill="url(#g280)"/></g></svg>
<span class="t" style="left:1064.30px;top:894.23px;font-size:12px;color:#000;letter-spacing:-0.043px;">Windows Performance Toolkit</span>
<svg style="left:1027px;top:927px;" width="16" height="13"><g transform="translate(0.4,0.2)"><defs><linearGradient id="g282" x1="0" y1="0" x2="1" y2="1"><stop offset="0" stop-color="#ffe293"/><stop offset="1" stop-color="#ffcf4c"/></linearGradient></defs><path d="M0.6 1.1 Q0.6 0.3 1.4 0.3 L5.2 0.3 Q5.8 0.3 6.3 0.8 L7.2 1.7 L13.6 1.7 Q14.4 1.7 14.4 2.5 L14.4 5 L0.6 5 Z" fill="#f5b619"/><path d="M0.6 3.2 L6 3.2 L7 1.9 L13.6 1.9 Q14.4 1.9 14.4 2.7 L14.4 10.9 Q14.4 11.7 13.6 11.7 L1.4 11.7 Q0.6 11.7 0.6 10.9 Z" fill="url(#g282)"/></g></svg>
<span class="t" style="left:1048.30px;top:926.23px;font-size:12px;color:#000;letter-spacing:0.095px;">Windows Mail</span>
<svg style="left:1003px;top:960px;" width="13" height="13"><g transform="translate(0.6,0.7)"><path d="M4.2 2.4 L7.8 6 L4.2 9.6" fill="none" stroke="#858585" stroke-width="1.55" stroke-linecap="round" stroke-linejoin="round"/></g></svg>
<svg style="left:1027px;top:959px;" width="16" height="13"><g transform="translate(0.4,0.2)"><defs><linearGradient id="g285" x1="0" y1="0" x2="1" y2="1"><stop offset="0" stop-color="#ffe293"/><stop offset="1" stop-color="#ffcf4c"/></linearGradient></defs><path d="M0.6 1.1 Q0.6 0.3 1.4 0.3 L5.2 0.3 Q5.8 0.3 6.3 0.8 L7.2 1.7 L13.6 1.7 Q14.4 1.7 14.4 2.5 L14.4 5 L0.6 5 Z" fill="#f5b619"/><path d="M0.6 3.2 L6 3.2 L7 1.9 L13.6 1.9 Q14.4 1.9 14.4 2.7 L14.4 10.9 Q14.4 11.7 13.6 11.7 L1.4 11.7 Q0.6 11.7 0.6 10.9 Z" fill="url(#g285)"/></g></svg>
<span class="t" style="left:1048.30px;top:958.23px;font-size:12px;color:#000;letter-spacing:-0.118px;">Windows Media Player</span>
<svg style="left:1003px;top:992px;" width="13" height="13"><g transform="translate(0.6,0.7)"><path d="M4.2 2.4 L7.8 6 L4.2 9.6" fill="none" stroke="#858585" stroke-width="1.55" stroke-linecap="round" stroke-linejoin="round"/></g></svg>
<svg style="left:1027px;top:991px;" width="16" height="13"><g transform="translate(0.4,0.2)"><defs><linearGradient id="g288" x1="0" y1="0" x2="1" y2="1"><stop offset="0" stop-color="#ffe293"/><stop offset="1" stop-color="#ffcf4c"/></linearGradient></defs><path d="M0.6 1.1 Q0.6 0.3 1.4 0.3 L5.2 0.3 Q5.8 0.3 6.3 0.8 L7.2 1.7 L13.6 1.7 Q14.4 1.7 14.4 2.5 L14.4 5 L0.6 5 Z" fill="#f5b619"/><path d="M0.6 3.2 L6 3.2 L7 1.9 L13.6 1.9 Q14.4 1.9 14.4 2.7 L14.4 10.9 Q14.4 11.7 13.6 11.7 L1.4 11.7 Q0.6 11.7 0.6 10.9 Z" fill="url(#g288)"/></g></svg>
<span class="t" style="left:1048.30px;top:990.23px;font-size:12px;color:#000;letter-spacing:-0.164px;">Windows NT</span>
<svg style="left:1003px;top:1024px;" width="13" height="13"><g transform="translate(0.6,0.7)"><path d="M4.2 2.4 L7.8 6 L4.2 9.6" fill="none" stroke="#858585" stroke-width="1.55" stroke-linecap="round" stroke-linejoin="round"/></g></svg>
<svg style="left:1027px;top:1023px;" width="16" height="13"><g transform="translate(0.4,0.2)"><defs><linearGradient id="g291" x1="0" y1="0" x2="1" y2="1"><stop offset="0" stop-color="#ffe293"/><stop offset="1" stop-color="#ffcf4c"/></linearGradient></defs><path d="M0.6 1.1 Q0.6 0.3 1.4 0.3 L5.2 0.3 Q5.8 0.3 6.3 0.8 L7.2 1.7 L13.6 1.7 Q14.4 1.7 14.4 2.5 L14.4 5 L0.6 5 Z" fill="#f5b619"/><path d="M0.6 3.2 L6 3.2 L7 1.9 L13.6 1.9 Q14.4 1.9 14.4 2.7 L14.4 10.9 Q14.4 11.7 13.6 11.7 L1.4 11.7 Q0.6 11.7 0.6 10.9 Z" fill="url(#g291)"/></g></svg>
<span class="t" style="left:1048.30px;top:1022.23px;font-size:12px;color:#000;letter-spacing:-0.078px;">Windows Photo Viewer</span>
<div style="left:1026px;top:1046px;width:20px;height:10px;overflow:hidden">
<svg style="left:1px;top:8px;" width="16" height="13"><g transform="translate(0.4,0.6)"><defs><linearGradient id="g294" x1="0" y1="0" x2="1" y2="1"><stop offset="0" stop-color="#ffe293"/><stop offset="1" stop-color="#ffcf4c"/></linearGradient></defs><path d="M0.6 1.1 Q0.6 0.3 1.4 0.3 L5.2 0.3 Q5.8 0.3 6.3 0.8 L7.2 1.7 L13.6 1.7 Q14.4 1.7 14.4 2.5 L14.4 5 L0.6 5 Z" fill="#f5b619"/><path d="M0.6 3.2 L6 3.2 L7 1.9 L13.6 1.9 Q14.4 1.9 14.4 2.7 L14.4 10.9 Q14.4 11.7 13.6 11.7 L1.4 11.7 Q0.6 11.7 0.6 10.9 Z" fill="url(#g294)"/></g></svg>
</div>
<div style="left:1317px;top:150px;width:16px;height:906px;background:#f0f0f0;"></div>
<div style="left:1335px;top:150px;width:1px;height:906px;background:#f7f7f7;"></div>
<div style="left:1324px;top:470px;width:2px;height:268px;background:#7b7b7b;"></div>
<span class="t" style="left:1367.40px;top:154.83px;font-size:12px;color:#4c607a;letter-spacing:-0.112px;">Name</span>
<svg style="left:1407px;top:145px;" width="13" height="13"><g transform="translate(0.9,0.9)"><path d="M2.7 7.7 L6 4.3 L9.3 7.7" fill="none" stroke="#4a4a4a" stroke-width="1.1" stroke-linecap="round" stroke-linejoin="round"/></g></svg>
<div style="left:1466px;top:150px;width:1px;height:25px;background:#e5e5e5;"></div>
<div style="left:1596px;top:150px;width:1px;height:25px;background:#e5e5e5;"></div>
<div style="left:1726px;top:150px;width:1px;height:25px;background:#e5e5e5;"></div>
<div style="left:1856px;top:150px;width:1px;height:25px;background:#e5e5e5;"></div>
<span class="t" style="left:1473.30px;top:154.83px;font-size:12px;color:#4c607a;letter-spacing:0.078px;">Date modified</span>
<span class="t" style="left:1603.10px;top:154.83px;font-size:12px;color:#4c607a;letter-spacing:-0.350px;transform:scaleX(0.9489);transform-origin:0.00px 50%;">Type</span>
<span class="t" style="left:1733.30px;top:154.83px;font-size:12px;color:#4c607a;letter-spacing:-0.350px;transform:scaleX(0.8709);transform-origin:0.00px 50%;">Size</span>
<div style="left:1351px;top:181px;width:502px;height:27px;background:#d9d9d9;border-radius:3px"></div>
<svg style="left:1357px;top:186px;" width="13" height="17"><path d="M1 0.5 H7.5 L11.5 4.5 V14.5 Q11.5 15 11 15 H1 Q0.5 15 0.5 14.5 V1 Q0.5 0.5 1 0.5 Z" fill="#fbfbfb" stroke="#a8a8a8" stroke-width="0.9"/><path d="M7.5 0.5 V4 Q7.5 4.5 8 4.5 H11.5" fill="#f0f0f0" stroke="#a8a8a8" stroke-width="0.9"/></svg>
<span class="t" style="left:1376.20px;top:187.23px;font-size:12px;color:#000;letter-spacing:0.023px;">winpe.wim</span>
<span class="t" style="left:1473.30px;top:187.23px;font-size:12px;color:#6d6d6d;letter-spacing:-0.282px;">5/18/2023 12:17 AM</span>
<span class="t" style="left:1603.10px;top:187.23px;font-size:12px;color:#6d6d6d;letter-spacing:-0.250px;">WIM File</span>
<span class="t" style="left:1793.50px;top:187.23px;font-size:12px;color:#6d6d6d;letter-spacing:-0.350px;transform:scaleX(0.9234);transform-origin:0.00px 50%;">704,551 KB</span>
<span class="t" style="left:975.10px;top:1060.23px;font-size:12px;color:#1e395b;letter-spacing:0.004px;">1 item</span>
<div style="left:1018px;top:1062px;width:1px;height:12px;background:#f3f3f3;"></div>
<span class="t" style="left:1029.30px;top:1060.23px;font-size:12px;color:#1e395b;letter-spacing:-0.124px;">1 item selected</span>
<span class="t" style="left:1114.20px;top:1060.23px;font-size:12px;color:#1e395b;letter-spacing:-0.350px;transform:scaleX(0.9697);transform-origin:0.00px 50%;">688 MB</span>
<div style="left:1163px;top:1062px;width:1px;height:12px;background:#f3f3f3;"></div>
<div style="left:1872px;top:1056px;width:21px;height:23px;border:1px solid #2a9bd7;background:#e6eef2;box-shadow:inset 0 0 0 3px #cde8f5"></div>
<div style="left:1877px;top:1062.8px;width:12px;height:1.2px;background:#0a0a0a;border-radius:0.6px"></div>
<div style="left:1877px;top:1065.85px;width:12px;height:1.2px;background:#0a0a0a;border-radius:0.6px"></div>
<div style="left:1877px;top:1068.9px;width:12px;height:1.2px;background:#0a0a0a;border-radius:0.6px"></div>
<div style="left:1877px;top:1071.95px;width:12px;height:1.2px;background:#0a0a0a;border-radius:0.6px"></div>
<div style="left:1898px;top:1061px;width:12px;height:10px;border:1.6px solid #0a0a0a;border-radius:1.2px"></div>
<div style="left:1898px;top:1071.9px;width:12px;height:1.3px;background:#0a0a0a;border-radius:0.6px"></div>
<div class="bd" style="left:0;top:0;width:960px;height:1080px;border:1px solid #6e6e6e"></div><div class="bd" style="left:960px;top:0;width:960px;height:1080px;border:1px solid #6e6e6e"></div>
</div></body></html>
